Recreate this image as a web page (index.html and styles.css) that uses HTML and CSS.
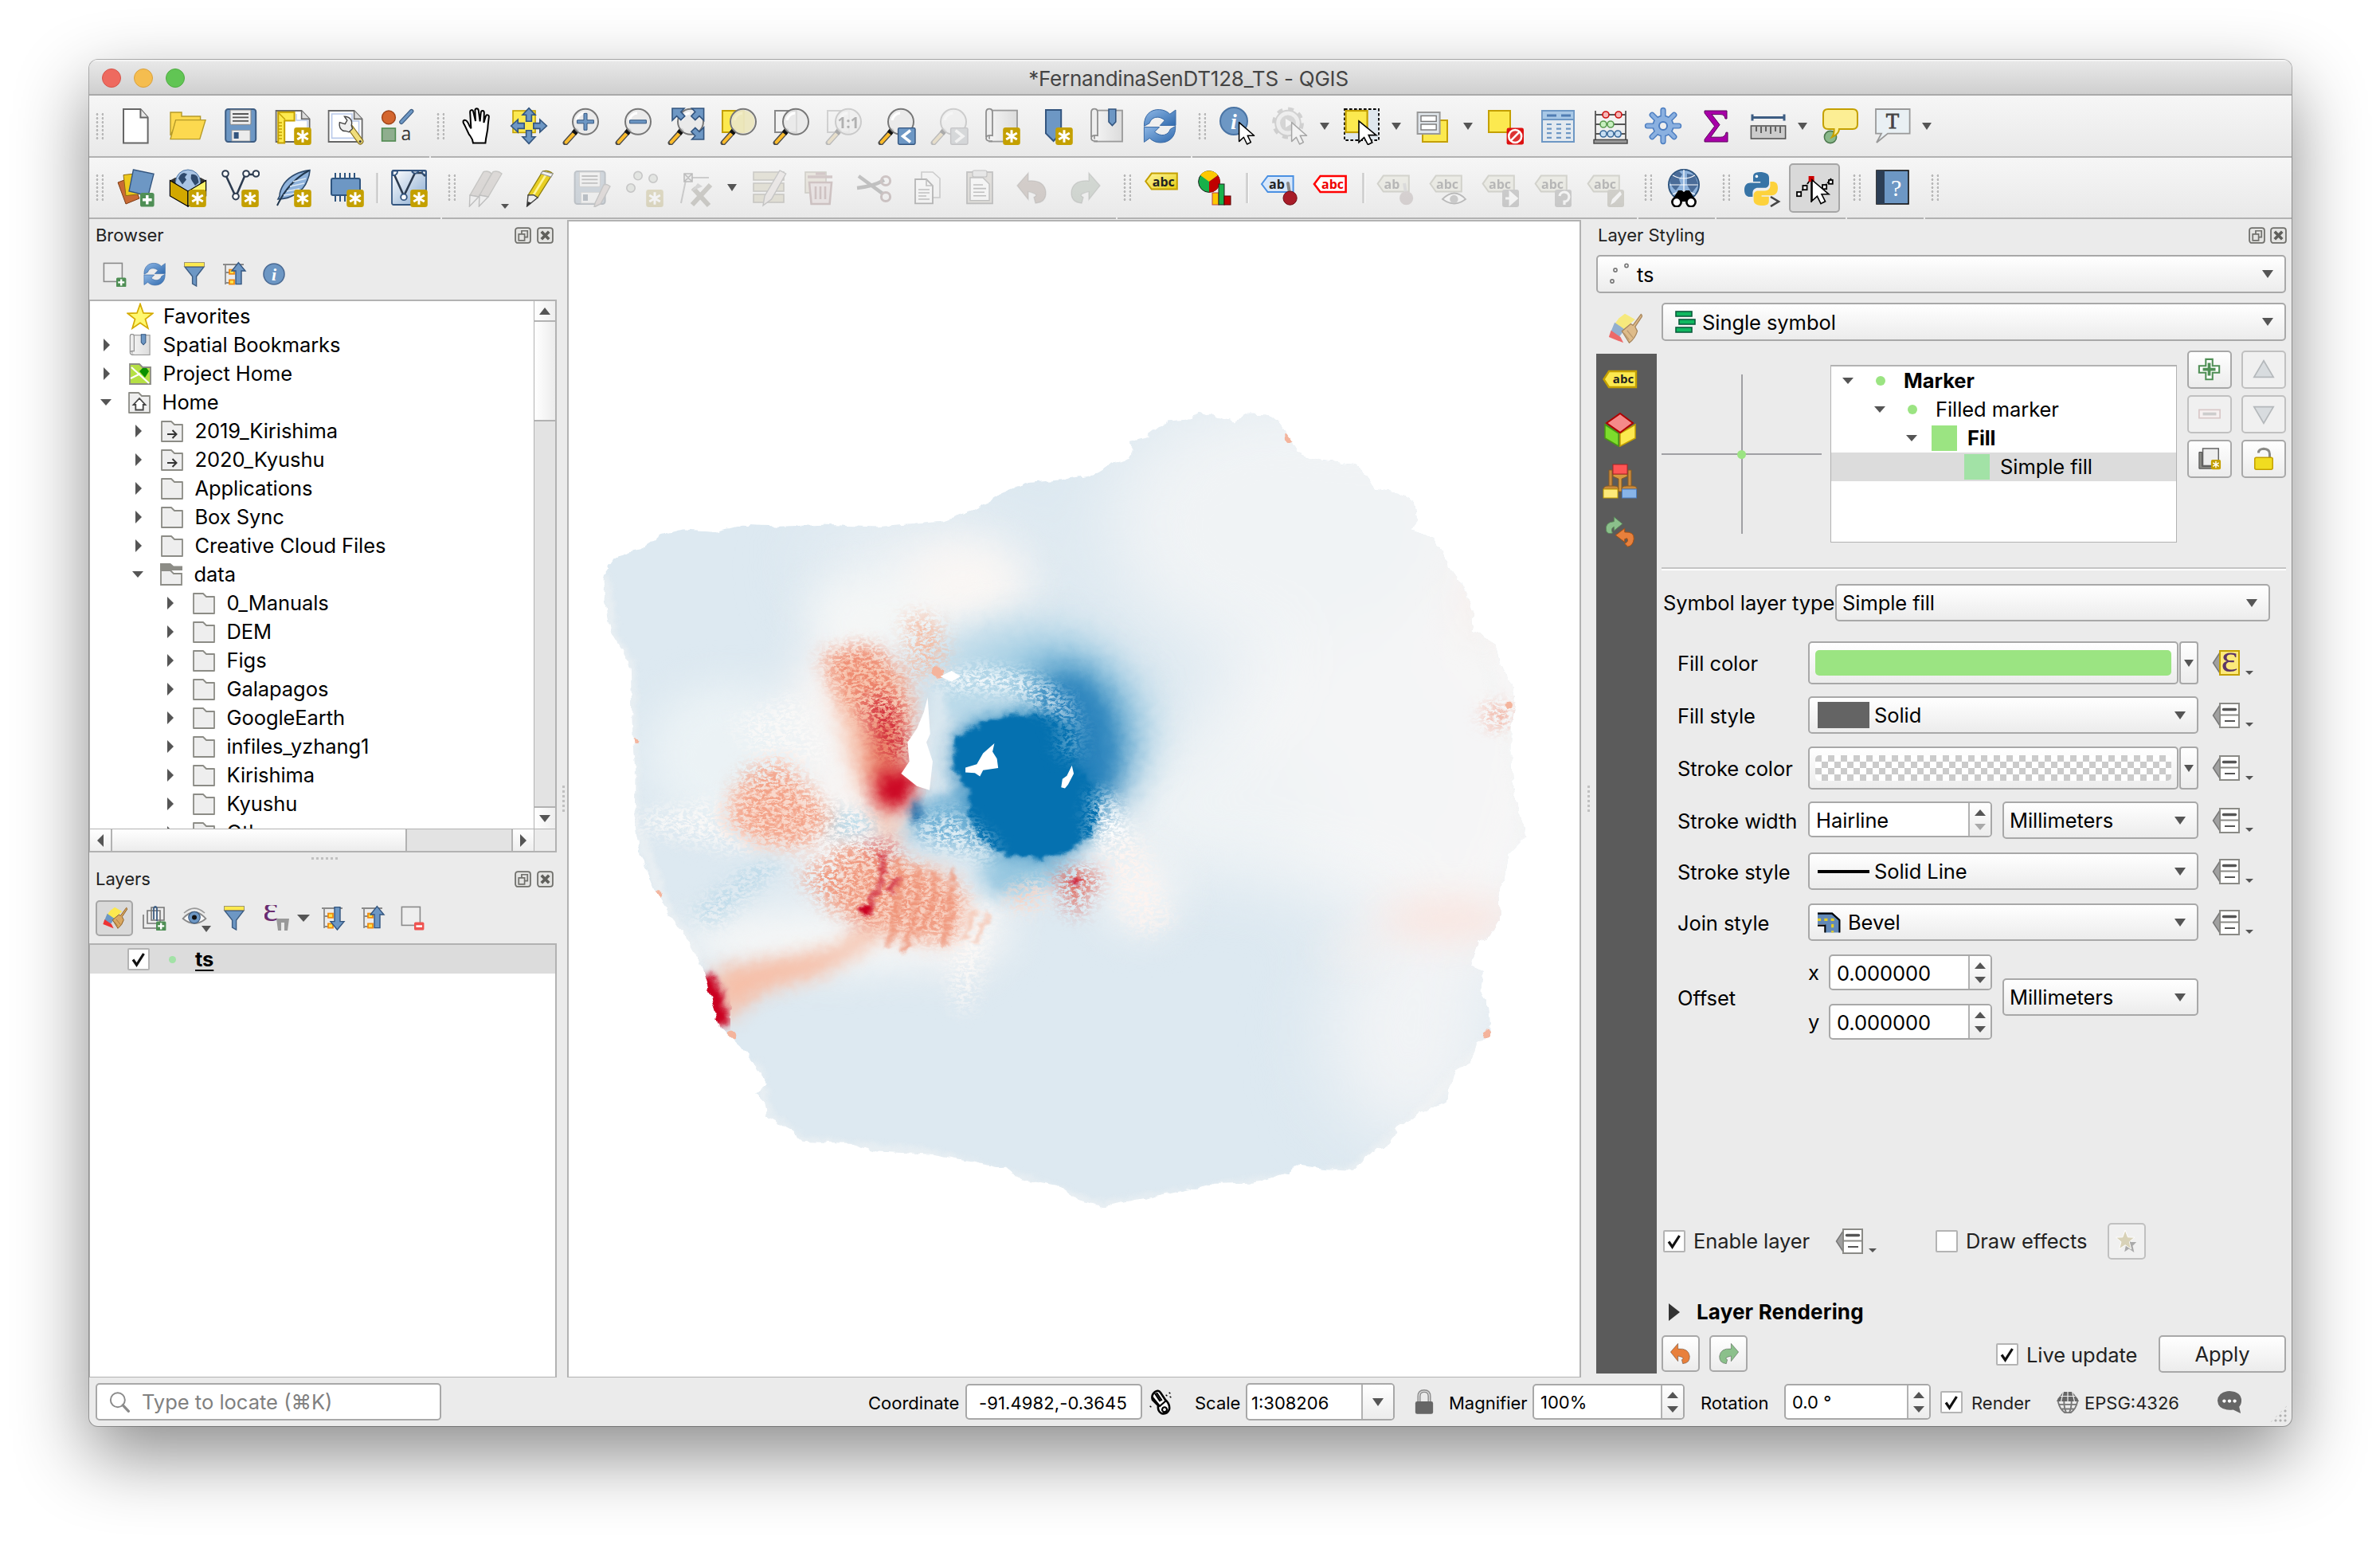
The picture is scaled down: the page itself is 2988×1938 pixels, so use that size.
FILE: index.html
```html
<!DOCTYPE html>
<html lang="en">
<head>
<meta charset="utf-8">
<title>*FernandinaSenDT128_TS - QGIS</title>
<link rel="stylesheet" href="styles.css">
</head>
<body>
<svg class="defs" width="0" height="0" aria-hidden="true">
<defs>
<linearGradient id="gBlue" x1="0" y1="0" x2="1" y2="1"><stop offset="0" stop-color="#8fb8e6"/><stop offset="1" stop-color="#2f69ad"/></linearGradient>
<linearGradient id="gMesh" x1="0" y1="0" x2="1" y2="1"><stop offset="0" stop-color="#fff"/><stop offset="1" stop-color="#86a9d0"/></linearGradient>
<linearGradient id="gYel" x1="0" y1="0" x2="1" y2="1"><stop offset="0" stop-color="#fff7a0"/><stop offset="1" stop-color="#e6cc10"/></linearGradient>
<linearGradient id="gGrey" x1="0" y1="0" x2="1" y2="0"><stop offset="0" stop-color="#f4f4f4"/><stop offset="1" stop-color="#dcdcdc"/></linearGradient>

<symbol id="badge" viewBox="0 0 24 24"><rect x="12.6" y="13" width="10.8" height="11" rx="1.6" fill="#c4a000"/><path d="M18 14.6v7.8M14.6 16.5l6.8 4M14.6 20.5l6.8-4" stroke="#fff" stroke-width="1.5" fill="none"/></symbol>
<symbol id="lens" viewBox="0 0 24 24"><path d="M8.6 15.2L2 22.6" stroke="#4a4a4a" stroke-width="3.4" stroke-linecap="round"/><path d="M7.2 16.9L2.3 22.3" stroke="#fcbc2c" stroke-width="2" stroke-linecap="round"/><path d="M9 14.6L7.2 16.8" stroke="#111" stroke-width="3.4"/><circle cx="14.5" cy="9.4" r="8" fill="#e9e9e9" fill-opacity=".85" stroke="#777" stroke-width="1"/><path d="M9 8.5a5.8 5.8 0 0 1 5-4.6" stroke="#fff" stroke-width="1.6" fill="none"/></symbol>
<symbol id="cursor" viewBox="0 0 24 24" overflow="visible"><path d="M12 9.800v12l2.900-2.700 2.100 4.400 2.400-1.200-2.100-4.200h4.200z" fill="#fff" stroke="#000" stroke-width=".75" stroke-linejoin="round"/></symbol>

<symbol id="new" viewBox="0 0 24 24"><path d="M4.5 1.5h10.7l4.6 5.2v16H4.500z" fill="#fff" stroke="#666"/><path d="M15.200 1.500v5.200h4.600" fill="#e8e8e8" stroke="#666"/></symbol>
<symbol id="open" viewBox="0 0 24 24"><path d="M1 3.500h7v2.500h11.800v4H5L1 18z" fill="#fcd94f" stroke="#b59a28" stroke-width=".7"/><path d="M4.300 8.300h18.700l-3.600 12H1z" fill="#fcd94f" stroke="#b59a28" stroke-width=".7"/></symbol>
<symbol id="save" viewBox="0 0 24 24"><rect x="2.600" y="1.500" width="19" height="20.500" rx="1.600" fill="#6d97c4" stroke="#3c5c82"/><path d="M5.500 2h13v8.500q0 .7-.7.7H6.200q-.7 0-.7-.7z" fill="#ececec" stroke="#888" stroke-width=".5"/><path d="M7 4.500h10M7 6.700h10M7 8.900h10" stroke="#555" stroke-width=".9"/><rect x="6.500" y="14.700" width="11.500" height="6.800" fill="#ececec" stroke="#999" stroke-width=".4"/><rect x="7.800" y="16" width="3" height="4" fill="#33557f"/></symbol>
<symbol id="layout" viewBox="0 0 24 24"><path d="M1.300 2.500h16l5 5.200V22H1.300z" fill="#fff" stroke="#666" stroke-width=".9"/><path d="M17.300 2.500v5.200h5" fill="#ddd" stroke="#666" stroke-width=".8"/><path d="M2.600 3.400h10.200v5.400H6.600v14H2.600z" fill="#fce94f" stroke="#c4a000" stroke-width="1"/><path d="M3 10h2M3 12h2M3 14h2M3 16h2M3 18h2M3 20h2M3 4l4 4" stroke="#c4a000" stroke-width=".7"/><path d="M14 4.500v4h7v5" fill="none" stroke="#b9c9ea" stroke-width=".7"/><use href="#badge"/></symbol>
<symbol id="manager" viewBox="0 0 24 24"><path d="M1.300 2.500h16l5 5.200V22H1.300z" fill="#fff" stroke="#666" stroke-width=".9"/><path d="M17.300 2.500v5.200h5" fill="#ddd" stroke="#666" stroke-width=".8"/><path d="M3.300 4.500h12.700v4.500h4.300v10.700H3.300z" fill="none" stroke="#b9c9ea" stroke-width=".8"/><path d="M14.500 12.500l6.700 9.200" stroke="#8a7320" stroke-width="4" stroke-linecap="round"/><path d="M15.200 13.500l6 8.200" stroke="#f0de7c" stroke-width="2.800" stroke-linecap="round"/><path d="M8.200 9.800l3.400 1 1.300-2.300-1.700-2.400c3.500 0 5.300 2.600 4.400 5.600l.7 2-2.200 2.200-2.100-.7c-2.200.4-4.500-1.800-3.800-5.400z" fill="#eee" stroke="#444" stroke-width=".7"/><circle cx="21.100" cy="21.800" r=".8" fill="#444"/></symbol>
<symbol id="stylem" viewBox="0 0 24 24"><ellipse cx="6" cy="6.700" rx="4.200" ry="4.200" fill="#d4662f" stroke="#a04418" stroke-width=".7"/><path d="M14 9.600l6.300-6.800" stroke="#3c5c82" stroke-width="2.800" stroke-linecap="round"/><path d="M14 9.600l6.300-6.800" stroke="#6d97c4" stroke-width="1.600" stroke-linecap="round"/><rect x="1.800" y="13.500" width="8.400" height="8" fill="#8fae8e" stroke="#4f8a50" stroke-width=".8"/><text x="13.700" y="21" font-size="11.500" class="ti" fill="#333">a</text></symbol>
<symbol id="hand" viewBox="0 0 24 24"><path d="M8.200 22.500c-.2-3-1.500-3.800-2.700-5.700L3 11.500c-.8-1.500-1.700-2.700-.5-3.300 1.200-.6 2.400 1 3.400 3.500l1 1.600L6.300 3.400c-.2-2 1.700-2.200 2-.5l1.400 5.800-.3-6.600c0-1.700 2-1.700 2.200 0l.9 6.800.6-5.700c.2-1.500 2-1.300 2 .2l-.2 6.300 1.200-4c.5-1.400 2.200-.9 2 .5l-.6 5c0 4-1.200 6.200-1.600 11.300z" fill="#fff" stroke="#000" stroke-width="1" transform="translate(1.800 .3)"/></symbol>
<symbol id="pan" viewBox="0 0 24 24"><rect x="2" y="2.500" width="14" height="13.700" fill="#fce94f" stroke="#c4a000" stroke-width=".8"/><path d="M12 .8l4 4.300h-2.300v4h-3.400v-4H8zM12 23.200l4-4.300h-2.300v-4h-3.400v4H8zM.8 12l4.300-4v2.300h4v3.400h-4V16zM23.200 12l-4.300-4v2.300h-4v3.400h4V16z" fill="#6d97c4" stroke="#33557f" stroke-width=".8"/></symbol>
<symbol id="zin" viewBox="0 0 24 24"><use href="#lens"/><path d="M13.500 4.200h2v4.200h4.200v2h-4.200v4.200h-2v-4.200H9.300v-2h4.200z" fill="#6d97c4" stroke="#33557f" stroke-width=".5"/></symbol>
<symbol id="zout" viewBox="0 0 24 24"><use href="#lens"/><path d="M9.300 8.400h10.400v2H9.300z" fill="#6d97c4" stroke="#33557f" stroke-width=".5"/></symbol>
<symbol id="zfull" viewBox="0 0 24 24"><use href="#lens"/><path d="M3 1h7.500L8.400 3.200l2.500 2.700-2.500 2.400-2.600-2.500L3 8.500zM22.800 1h-7.500l2.100 2.200-2.500 2.700 2.500 2.400L20 5.800l2.800 2.700zM22.800 20.500h-7.500l2.100-2.200-2.500-2.700 2.500-2.400 2.600 2.500 2.800-2.700z" fill="#6d97c4" stroke="#33557f" stroke-width=".8"/></symbol>
<symbol id="zsel" viewBox="0 0 24 24"><rect x="1.500" y="2.500" width="13.500" height="13.500" fill="#fce94f" stroke="#c4a000"/><use href="#lens"/><circle cx="14.500" cy="9.400" r="7.200" fill="#ece6b0" fill-opacity=".7"/></symbol>
<symbol id="zlay" viewBox="0 0 24 24"><rect x="1.500" y="2.500" width="13.500" height="13.500" fill="#f2f2f2" stroke="#888"/><use href="#lens"/></symbol>
<symbol id="znat" viewBox="0 0 24 24"><rect x="1.500" y="2.500" width="13.500" height="13.500" fill="#f2f2f2" stroke="#888"/><use href="#lens"/><text x="14.500" y="13.400" font-size="9.500" font-weight="700" text-anchor="middle" class="ti" fill="#222">1:1</text></symbol>
<symbol id="zlast" viewBox="0 0 24 24"><use href="#lens"/><rect x="12.800" y="13.300" width="10.700" height="10.300" rx=".8" fill="#6d97c4" stroke="#33557f" stroke-width=".7"/><path d="M20.500 14.800L15.800 18.500l4.700 3.700" fill="none" stroke="#fff" stroke-width="1.800"/></symbol>
<symbol id="znext" viewBox="0 0 24 24"><use href="#lens"/><rect x="12.800" y="13.300" width="10.700" height="10.300" rx=".8" fill="#9aa7b5" stroke="#667" stroke-width=".7"/><path d="M15.800 14.800l4.700 3.700-4.700 3.700" fill="none" stroke="#fff" stroke-width="1.800"/></symbol>
<symbol id="roll" viewBox="0 0 24 24"><rect x="4" y="2.300" width="17.500" height="19.500" fill="url(#gGrey)" stroke="#9a9a9a" stroke-width=".9"/><path d="M2 19V3.500Q2 1.300 4 1.300T6 3.500v14.600q-4-.6-4 1.600t4 1.900" fill="#eee" stroke="#8f8f8f" stroke-width=".9"/></symbol>
<symbol id="nview" viewBox="0 0 24 24"><use href="#roll"/><use href="#badge"/></symbol>
<symbol id="nbook" viewBox="0 0 24 24"><path d="M6.500 2h9.600v14.500l-4.800 5-4.800-4.800z" fill="#6d97c4" stroke="#33557f"/><use href="#badge"/></symbol>
<symbol id="sbook" viewBox="0 0 24 24"><use href="#roll"/><path d="M13 1.500h4.400v8l-2.200 2.300L13 9.500z" fill="#6d97c4" stroke="#33557f" stroke-width=".8"/></symbol>
<symbol id="refresh" viewBox="0 0 24 24"><path d="M2.200 12.200C2 5 6.500 1.500 11.700 1.800c3 .1 5 1.200 6.700 2.800L22 2v9.700h-9.800l3-3.200c-4-3.400-8.500-2-9.600 1.800z" fill="url(#gBlue)" stroke="#3a6aa5" stroke-width=".5"/><path d="M21.900 12.200c.2 7.200-4.300 10.300-9.500 10.300-3 0-5-1.200-6.700-2.800L2.200 22.200v-9.400h9.600l-3 3c4 3.400 8.600 2.200 9.800-1.700z" fill="url(#gBlue)" stroke="#3a6aa5" stroke-width=".5"/></symbol>
<symbol id="ident" viewBox="0 0 24 24"><circle cx="9.500" cy="9" r="8.500" fill="#6d97c4" stroke="#4a74a4"/><text x="9.500" y="14" font-size="14" font-style="italic" font-weight="700" text-anchor="middle" class="se" fill="#fff">i</text><use href="#cursor" x=".8"/></symbol>
<symbol id="action" viewBox="0 0 24 24"><circle cx="10.500" cy="10.300" r="8.700" fill="none" stroke="#888" stroke-width="2.600" stroke-dasharray="3.400 3.400"/><circle cx="10.500" cy="10.300" r="7.900" fill="#e6e6e6" stroke="#888" stroke-width="1"/><circle cx="10.500" cy="10.300" r="5" fill="#999" /><path d="M9 7.500l4.500 2.800L9 13z" fill="#fff"/><use href="#cursor" x=".8"/></symbol>
<symbol id="select" viewBox="0 0 24 24"><rect x="1" y="1.500" width="21.500" height="19.500" fill="#dfe7ee" stroke="#000" stroke-width=".9" stroke-dasharray="1.800 1.200"/><rect x="1.800" y="2.500" width="13.500" height="13.500" fill="#fce94f" stroke="#c4a000" stroke-width="1.100"/><path d="M10 9v13.300l3.300-3 2.400 4.500 2.700-1.400-2.300-4.600h4.800z" fill="#fff" stroke="#000" stroke-width=".8"/></symbol>
<symbol id="selform" viewBox="0 0 24 24"><rect x="5" y="8.500" width="15.500" height="13.500" fill="#fce94f" stroke="#c4a000"/><rect x="1.800" y="3.500" width="14" height="13.500" fill="#dfe5ea" stroke="#999"/><rect x="4" y="5.700" width="9.600" height="3.500" fill="#fff" stroke="#777" stroke-width=".7"/><rect x="4" y="11" width="9.600" height="3.500" fill="#fff" stroke="#777" stroke-width=".7"/></symbol>
<symbol id="desel" viewBox="0 0 24 24"><rect x="1.500" y="2.500" width="13.500" height="13.500" fill="#fce94f" stroke="#c4a000"/><rect x="12.800" y="13.300" width="10.700" height="10.500" rx="1.200" fill="#d11"/><circle cx="18.100" cy="18.500" r="4" fill="#d33" stroke="#fff" stroke-width="1.300"/><path d="M15.300 21.300l5.600-5.600" stroke="#fff" stroke-width="1.300"/></symbol>
<symbol id="table" viewBox="0 0 24 24"><rect x="2" y="2.500" width="20" height="19.500" fill="#e3e9ef" stroke="#6d97c4"/><rect x="2.400" y="3" width="19.200" height="5" fill="#a8c8e6"/><path d="M2 8h20" stroke="#6d97c4"/><path d="M5 5.500h6M14 5.500h6" stroke="#4f7db3" stroke-width="1.600"/><path d="M5 11h3M11 11h3M17 11h3M5 13.800h3M11 13.800h3M17 13.800h3M5 16.600h3M11 16.600h3M17 16.600h3M5 19.400h3M11 19.400h3M17 19.400h3" stroke="#6d97c4" stroke-width="1.100"/></symbol>
<symbol id="abacus" viewBox="0 0 24 24"><path d="M2.500 2.500v19M21.500 2.500v19M2.500 5h19M2.500 11h19M2.500 17h19" stroke="#555" stroke-width=".9" fill="none"/><g stroke-width=".8"><g fill="#f6b7b7" stroke="#c11"><circle cx="9" cy="5" r="2"/><circle cx="17" cy="5" r="2"/></g><g fill="#c8efc0" stroke="#5a9c50"><circle cx="7.500" cy="11" r="2"/><circle cx="12" cy="11" r="2"/></g><g fill="#c7def2" stroke="#3c6c9c"><circle cx="7.500" cy="17" r="2"/><circle cx="12" cy="17" r="2"/><circle cx="16.600" cy="17" r="2"/></g></g><rect x="1.500" y="20.700" width="21" height="2.300" fill="#999" stroke="#444" stroke-width=".7"/></symbol>
<symbol id="cog" viewBox="0 0 24 24"><g stroke="#4a7cc0" stroke-width="3.600" stroke-linecap="round"><path d="M12 2.200v19.600M2.200 12h19.600M5.100 5.100l13.800 13.800M18.900 5.100L5.100 18.900"/></g><circle cx="12" cy="12" r="6.800" fill="#4a7cc0"/><g stroke="#8ab0e0" stroke-width="2.200" stroke-linecap="round"><path d="M12 2.200v19.600M2.200 12h19.600M5.100 5.100l13.800 13.800M18.900 5.100L5.100 18.900"/></g><circle cx="12" cy="12" r="6" fill="#8ab0e0"/><circle cx="12" cy="12" r="2.500" fill="#eee" stroke="#4a7cc0"/></symbol>
<symbol id="sigma" viewBox="0 0 24 24"><path d="M5 2.500h14v5h-1q-.5-2.700-3-2.700H9.500l5 6.500-5.700 7.800H15q3 0 3.500-3h1V22H5v-1.500l6.300-8.300L5 4z" fill="#a800a8" stroke="#5c005c" stroke-width=".5"/></symbol>
<symbol id="ruler" viewBox="0 0 24 24"><path d="M2 6.800h20M2 4.800v4M22 4.800v4" stroke="#3c5c82" stroke-width="1.500"/><rect x="1.200" y="12" width="21.600" height="8" fill="#ccc" stroke="#555" stroke-width=".8"/><path d="M4.500 12.500v3M7.500 12.500v4M10.500 12.500v3M13.500 12.500v4.500M16.500 12.500v3M19.500 12.500v4" stroke="#555" stroke-width=".9"/></symbol>
<symbol id="tip" viewBox="0 0 24 24"><circle cx="6" cy="19" r="3.800" fill="#8ab98a" stroke="#4f7a50" stroke-width=".8"/><path d="M4.500 1.500h15.500q3 0 3 3v6.500q0 3-3 3h-8.500q0 3-4.500 5 1.500-2 1.300-5H4.500q-3 0-3-3V4.500q0-3 3-3z" fill="#fcee94" stroke="#c4a000" stroke-width="1"/></symbol>
<symbol id="anno" viewBox="0 0 24 24"><path d="M1.500 1.500h21.300v15.300H9l-7 5.700 3-5.700H1.500z" fill="#e9f0f4" stroke="#999" stroke-width=".9"/><text x="12" y="13.600" font-size="13.500" text-anchor="middle" class="se" fill="#444" stroke="#444" stroke-width=".4">T</text></symbol>

<symbol id="dsm" viewBox="0 0 24 24"><path d="M1 8.500l8-3 5.500 13-8.500 3.500z" fill="#c96a34" stroke="#7c3c14" stroke-width=".5"/><path d="M4.500 3.800l9-1 1.500 13-9 1z" fill="#edc91d" stroke="#8f6a10" stroke-width=".5"/><path d="M10.700.5L23.500 3.200 20 16.800 8 14z" fill="#6d97c4" stroke="#33557f" stroke-width=".7"/><rect x="15" y="15" width="8.800" height="8.800" rx="1.300" fill="#4f8f55"/><path d="M19.400 16.500v5.800M16.500 19.400h5.800" stroke="#fff" stroke-width="1.700"/></symbol>
<symbol id="gpkg" viewBox="0 0 24 24"><path d="M.7 7.300L4 5.500h16l3.300 1.800L12 14z" fill="#333"/><circle cx="12" cy="8.300" r="7.800" fill="#a9c4e4" stroke="#4a74a4" stroke-width=".5"/><path d="M6 6q1-3 3.500-3.500l2 .8-1.500 2 1 1.500-2.500 3zM14 3.500q2.500-.5 4 1.500l.8 3.500-2.300 2-2-3-.7-1.500z" fill="#2f4a6d"/><path d="M.7 7.300L12 14v9.500L.7 17z" fill="#d2a800" stroke="#000" stroke-width=".6"/><path d="M23.300 7.300L12 14v9.500l11.300-6.500z" fill="#fcf46c" stroke="#000" stroke-width=".6"/><use href="#badge"/></symbol>
<symbol id="vec" viewBox="0 0 24 24"><path d="M2.500 3.500L9 17.500 15 3.500h6" fill="none" stroke="#2d3c50" stroke-width="1.300"/><g fill="#fff" stroke="#2d3c50" stroke-width="1"><circle cx="2.500" cy="3" r="1.900"/><circle cx="9" cy="17.300" r="1.900"/><circle cx="15.500" cy="3" r="1.900"/><circle cx="21.700" cy="3" r="1.900"/></g></symbol>
<symbol id="nvec" viewBox="0 0 24 24"><use href="#vec"/><use href="#badge"/></symbol>
<symbol id="feather" viewBox="0 0 24 24"><path d="M22.500.8Q12 2 6.500 9 3.500 13.500 3.500 17l-1 2Q9 18.800 13 16q6-3 8-9 1.300-3 1.500-6.200z" fill="#8fb3dc" stroke="#2d4a6c" stroke-width=".8"/><path d="M22 1Q9 8 2 23" fill="none" stroke="#22384f" stroke-width="1"/><path d="M12 8l8-2M10 11l9-2M8 14l8-1.500M6 16.500l7-1" stroke="#dfeaf6" stroke-width=".7"/></symbol>
<symbol id="spat" viewBox="0 0 24 24"><use href="#feather"/><use href="#badge"/></symbol>
<symbol id="chip" viewBox="0 0 24 24"><path d="M5.500 2.500v18M8.500 2.500v18M11.500 2.500v18M14.500 2.500v18M17.500 2.500v18" stroke="#2f557f" stroke-width="1"/><rect x="3" y="6" width="18" height="10.500" rx="1" fill="#6d97c4" stroke="#2f557f"/><use href="#badge"/></symbol>
<symbol id="mesh" viewBox="0 0 24 24"><rect x="1" y="1" width="21.500" height="21.500" rx="1" fill="url(#gMesh)" stroke="#33557f" stroke-width=".9"/><path d="M2 2.500L8.500 17 15.500 2.500h4.500l2 2" fill="none" stroke="#2d3c50" stroke-width="1.300"/><g fill="#fff" stroke="#33557f" stroke-width=".9"><path d="M1.500 4a2.500 2.500 0 0 0 3-2.700H1.500zM13.500 1.300a2.200 2.200 0 0 0 4.200 0zM20 1.300a2.200 2.200 0 0 0 2.300 2.400V1.300z"/><circle cx="8.500" cy="17.700" r="1.900"/></g><use href="#badge"/></symbol>
<symbol id="pencil" viewBox="0 0 24 24"><path d="M4.500 16.500L13.700 1.500q3.500-1 6.300 1.500l-9.500 15z" fill="#e8cf22" stroke="#8f7f10" stroke-width=".7"/><path d="M7.500 17L16.700 2" stroke="#fff59a" stroke-width="1.300"/><path d="M4.500 16.500l-.7 7 6.700-5.500-2.500-1.700z" fill="#eee" stroke="#444" stroke-width=".7"/><path d="M4.200 20.500l-.4 3 2.800-2.300z" fill="#333"/><path d="M13.700 1.500l6.300 1.500-1 2-6.500-2z" fill="#f3f3f3" stroke="#999" stroke-width=".6"/></symbol>
<symbol id="pencils" viewBox="0 0 24 24"><path d="M1 16.500L9.500 1.800q3-1 5 1.200l-8 14.500zM7 16.500L15.500 1.800q3-1 5.500 1.200l-8.500 14.500z" fill="#b59c90" stroke="#665" stroke-width=".7"/><path d="M1 16.500l-.3 7 5.800-6zM7 16.500l-.3 7 5.800-6z" fill="#eee" stroke="#555" stroke-width=".7"/></symbol>
<symbol id="saveed" viewBox="0 0 24 24"><g transform="translate(-1.800)"><use href="#save"/></g><path d="M13.500 21.500L19 10q2-.8 4 1l-6 11-4 2z" fill="#c5a79b" stroke="#666" stroke-width=".7"/></symbol>
<symbol id="addpt" viewBox="0 0 24 24"><g fill="#b9cbb4" stroke="#666" stroke-width=".8"><circle cx="7.500" cy="4.300" r="2.600"/><circle cx="17" cy="6" r="2.600"/><circle cx="3" cy="12" r="2.600"/></g><use href="#badge"/></symbol>
<symbol id="vertex" viewBox="0 0 24 24"><path d="M1.500 21.500L4.500 7M8 5.500h11" stroke="#777" stroke-width="1" fill="none"/><path d="M3.500 3h5v5h-5zM3.500 3l5 5M8.500 3l-5 5" fill="#ddd" stroke="#444" stroke-width=".8"/><path d="M9 12l10 11M20 10L8.500 22.500" stroke="#7c7458" stroke-width="3"/><path d="M8 14l4-5 3 2z" fill="#999"/></symbol>
<symbol id="multi" viewBox="0 0 24 24"><g fill="#ccb96f" stroke="#777055" stroke-width=".8"><rect x="2" y="2" width="19" height="5"/><rect x="2" y="9" width="19" height="5"/><rect x="2" y="16" width="19" height="5"/></g><path d="M9 17L18.500 1l3.800 2-9 16-5.300 4z" fill="#e0d0c8" stroke="#666" stroke-width=".7"/></symbol>
<symbol id="trash" viewBox="0 0 24 24"><rect x="1.500" y="2" width="13" height="13" fill="#d8c890" stroke="#8a7f50" stroke-width=".8"/><path d="M3 5h15.500M8 3h6" stroke="#b06060" stroke-width="1.800"/><path d="M4 8.500h14L16.800 22H5.300z" fill="#e8c0c0" stroke="#a55" stroke-width="1.300"/><path d="M8 11v8M11 11v8M14 11v8" stroke="#a55" stroke-width="1.300"/></symbol>
<symbol id="cut" viewBox="0 0 24 24"><path d="M2 4.500l15.500 11.300M1 12q10-1 17-5" stroke="#555" stroke-width="2.200" fill="none"/><circle cx="19" cy="7.500" r="2.800" fill="none" stroke="#955" stroke-width="1.500"/><circle cx="19" cy="17.500" r="2.800" fill="none" stroke="#955" stroke-width="1.500"/></symbol>
<symbol id="copy" viewBox="0 0 24 24"><path d="M8.500 2h7l4.500 4v12H8.500z" fill="#f4f4f4" stroke="#777" stroke-width=".8"/><path d="M4.500 6.500h7l4 4V21.700h-11z" fill="#fff" stroke="#333" stroke-width=".9"/><path d="M11.500 6.500v4h4M6.500 13h7M6.500 15h7M6.500 17h5M6.500 19h7" stroke="#555" stroke-width=".8" fill="none"/></symbol>
<symbol id="paste" viewBox="0 0 24 24"><rect x="4" y="2" width="16" height="19.700" fill="#bdb39a" stroke="#555" stroke-width=".9"/><path d="M6 5.500h8l4 4v10.300H6z" fill="#fff" stroke="#555" stroke-width=".7"/><rect x="7.500" y="1" width="9" height="4" rx="1" fill="#ccc" stroke="#555" stroke-width=".6"/><path d="M8 10h6M8 12.300h8M8 14.600h7M8 16.900h8" stroke="#555" stroke-width=".8"/></symbol>
<symbol id="undo" viewBox="0 0 24 24"><path d="M2.500 10.500L9.500 2.500v5q10-.8 11 7 .3 6.500-6.500 7l-1-3.700q4-1.800-3.500-3.500v5z" fill="currentColor" stroke="#0005" stroke-width=".7"/></symbol>
<symbol id="redo" viewBox="0 0 24 24"><use href="#undo" transform="matrix(-1 0 0 1 24 0)"/></symbol>
<symbol id="lab" viewBox="0 0 24 24"><g transform="translate(-.6)"><path d="M1.700 7.800l3.800-5h16v10h-16z" fill="url(#gYel)" stroke="#c4a000" stroke-width="1"/><text x="13" y="11" font-size="8" font-weight="700" text-anchor="middle" class="ti" fill="#222">abc</text></g></symbol>
<symbol id="diag" viewBox="0 0 24 24"><circle cx="8" cy="8" r="6.700" fill="#18b04a" stroke="#222" stroke-width=".5"/><path d="M8 8L2.500 4A6.700 6.700 0 0 1 13.500 4z" fill="#fdc800"/><path d="M8 8l5.500-4A6.700 6.700 0 0 1 8 14.700z" fill="#c00000"/><rect x="10" y="15" width="4" height="7.500" fill="#fdc800" stroke="#b44" stroke-width=".5"/><rect x="14" y="9.500" width="3.500" height="13" fill="#18b04a" stroke="#222" stroke-width=".5"/><rect x="17.500" y="17" width="4" height="5.500" fill="#c00000" stroke="#500" stroke-width=".5"/></symbol>
<symbol id="pinl" viewBox="0 0 24 24"><path d="M1 9.500l3.800-5h16v10h-16z" fill="#d7e7fa" stroke="#4a90e2" stroke-width="1"/><text x="10.500" y="12.600" font-size="8" font-weight="700" text-anchor="middle" class="ti" fill="#222">ab</text><path d="M17.500 9l1.500 9" stroke="#888" stroke-width="2" stroke-linecap="round"/><circle cx="18.800" cy="18.300" r="4.300" fill="#a81c28" stroke="#6c0c14" stroke-width=".5"/></symbol>
<symbol id="unpl" viewBox="0 0 24 24"><path d="M1 9.500l3.800-5h16v10h-16z" fill="#fff" stroke="#f00" stroke-width="1.300"/><text x="12.500" y="12.500" font-size="8" font-weight="700" text-anchor="middle" class="ti" fill="#e00">abc</text></symbol>
<symbol id="ltag" viewBox="0 0 24 24"><path d="M.8 9.300l3.600-5h16v10h-16z" fill="#dddcae" stroke="#8f8f60" stroke-width="1"/><text x="11.500" y="12.600" font-size="8" font-weight="700" text-anchor="middle" class="ti" fill="#333">abc</text></symbol>
<symbol id="l1" viewBox="0 0 24 24"><path d="M.8 9.300l3.600-5h16v10h-16z" fill="#dddcae" stroke="#8f8f60" stroke-width="1"/><text x="9.700" y="12.600" font-size="8" font-weight="700" text-anchor="middle" class="ti" fill="#333">ab</text><path d="M17.500 9l1.500 9" stroke="#aaa" stroke-width="2"/><circle cx="18.800" cy="18.300" r="4.300" fill="#a88"/></symbol>
<symbol id="l2" viewBox="0 0 24 24"><use href="#ltag"/><path d="M8.500 19q7.500-7.500 14.500 0-7 5.500-14.500 0z" fill="#fff" stroke="#444" stroke-width=".9"/><circle cx="15.700" cy="19" r="2.600" fill="#777"/></symbol>
<symbol id="l3" viewBox="0 0 24 24"><use href="#ltag"/><rect x="13" y="13" width="10.500" height="11" rx="1.500" fill="#777"/><path d="M15 18.500h5M18 15l4 3.500-4 3.500z" stroke="#fff" stroke-width="1.500" fill="#fff"/></symbol>
<symbol id="l4" viewBox="0 0 24 24"><use href="#ltag"/><rect x="13" y="13" width="10.500" height="11" rx="1.500" fill="#777"/><path d="M16 17a3 3 0 1 1 3 3.500v2" stroke="#fff" stroke-width="1.600" fill="none"/></symbol>
<symbol id="l5" viewBox="0 0 24 24"><use href="#ltag"/><rect x="13" y="13" width="10.500" height="11" rx="1.500" fill="#8b8660"/><path d="M15 22.500l1-3.500 5-5 1 2-4.500 5z" fill="#fff"/></symbol>
<symbol id="meta" viewBox="0 0 24 24"><circle cx="12" cy="10" r="9.500" fill="#8fb3dc" stroke="#2f557f" stroke-width="1"/><path d="M3 7q2-4 6-5.500l2 2-2 3 1 3-3 4q-3-2-4-6.500zM14 3l5 1 2 6-4 5-3-5z" fill="#4a6c98"/><path d="M3 10h18M12 .5v19M5 4q7 4 14 0M5 16q7-4 14 0" stroke="#fff" stroke-width=".6" fill="none"/><path d="M8.500 13.500h2.200l1.300 1 1.300-1h2.200l4.500 7H4z" fill="#000"/><circle cx="7.500" cy="20.800" r="2.800" fill="#fff" stroke="#000" stroke-width="1.300"/><circle cx="16.500" cy="20.800" r="2.800" fill="#fff" stroke="#000" stroke-width="1.300"/></symbol>
<symbol id="python" viewBox="0 0 24 24"><path d="M10.800 2c-4.500 0-4.300 1.900-4.300 4v2h4.600v.8H4.700C2.500 8.800 1 10.400 1 13.200s1.400 4.300 3.400 4.300h1.800v-2.400c0-2 1.500-3.200 3.300-3.200h4.300c1.500 0 2.700-1.200 2.700-2.800V5.500C16.500 3 14 2 10.800 2z" fill="#3774a6"/><circle cx="8.700" cy="4.700" r=".9" fill="#fff"/><path d="M12.200 23c4.500 0 4.200-1.900 4.200-4v-1.600h-4.600v-.8h6.500c2.200 0 3.700-1.600 3.700-4.600S20.600 8 18.600 8h-1.400v2.500c0 2-1.500 3.200-3.300 3.200H9.500c-1.500 0-2.700 1.200-2.700 2.800v3C6.800 22 9 23 12.200 23z" fill="#fdd23c"/><path d="M17.500 17.500l5 3-5 3" stroke="#444" stroke-width="1.300" fill="none"/></symbol>
<symbol id="active" viewBox="0 0 24 24"><path d="M2.500 15.500L6 11.500l4-5.500 4 6M18.500 11l4-5" stroke="#000" stroke-width=".9" fill="none" stroke-dasharray="2 .6"/><path d="M10 6v15" stroke="#000" stroke-width=".8"/><g fill="#fff" stroke="#000" stroke-width=".9"><rect x="1" y="14.500" width="2.600" height="2.600"/><rect x="4.700" y="10.500" width="2.600" height="2.600"/><rect x="17" y="10" width="2.600" height="2.600"/><rect x="21" y="7" width="2.400" height="2.400"/></g><rect x="8.300" y="4.500" width="3.500" height="3.500" fill="#c00"/><path d="M10.500 7v13l3.200-2.800 2.300 4.600 2.800-1.400-2.300-4.500h4.500z" fill="#fff" stroke="#000" stroke-width=".8"/></symbol>
<symbol id="help" viewBox="0 0 24 24"><rect x="2" y="1" width="20" height="21" fill="#6d97c4" stroke="#111" stroke-width=".8"/><rect x="2" y="1" width="5" height="21" fill="#2c3e55"/><text x="14.300" y="17" font-size="15" text-anchor="middle" class="se" fill="#fff">?</text></symbol>

<symbol id="addl" viewBox="0 0 16 16"><rect x="1.200" y="1.200" width="11.500" height="11.500" fill="#eee" stroke="#8a8a8a" stroke-width=".8"/><rect x="9" y="10.200" width="6.200" height="6" rx=".8" fill="#4f8f55"/><path d="M12.100 11.200v4M10.100 13.200h4" stroke="#fff" stroke-width="1.200"/></symbol>
<symbol id="filter" viewBox="0 0 16 16"><path d="M2 3.500h12L9.300 9.500v6l-2.500-1.500V9.500z" fill="#6d97c4" stroke="#3c5c82" stroke-width=".7"/><rect x="1.700" y=".8" width="12.600" height="2.500" fill="#fce94f" stroke="#8a8060" stroke-width=".4"/></symbol>
<symbol id="coll" viewBox="0 0 16 16"><path d="M1 2h13M2.500 2v12.500M2.500 7h3M2.500 13.500h3" stroke="#8a8a8a" stroke-width=".9" fill="none"/><rect x="5" y="5.300" width="3" height="2.600" fill="#fce94f" stroke="#f08a10" stroke-width=".9"/><rect x="5" y="11.700" width="3" height="2.600" fill="#fce94f" stroke="#f08a10" stroke-width=".9"/><path d="M10.700.8L15 6h-2.500v8.300H9V6H6.500z" fill="#6d97c4" stroke="#33557f" stroke-width=".7"/></symbol>
<symbol id="expd" viewBox="0 0 16 16"><path d="M1 2h13M2.500 2v12.500M2.500 7h3M2.500 13.500h3" stroke="#8a8a8a" stroke-width=".9" fill="none"/><rect x="5" y="5.300" width="3" height="2.600" fill="#fce94f" stroke="#f08a10" stroke-width=".9"/><rect x="5" y="11.700" width="3" height="2.600" fill="#fce94f" stroke="#f08a10" stroke-width=".9"/><path d="M10.700 15.500L15 10.300h-2.500v-9H9v9H6.500z" fill="#6d97c4" stroke="#33557f" stroke-width=".7"/></symbol>
<symbol id="info" viewBox="0 0 16 16"><circle cx="8" cy="8" r="6.500" fill="#6d97c4" stroke="#4a6a94" stroke-width=".8"/><text x="8" y="12" font-size="11" font-style="italic" font-weight="700" text-anchor="middle" class="se" fill="#fff">i</text></symbol>
<symbol id="brush" viewBox="0 0 24 24"><path d="M8 5L12 2l7 4-8 7-6-4z" fill="#fce94f"/><path d="M5 8l7 5-4 5-5.500-4z" fill="#6d97c4"/><path d="M2.500 13.500L9 18l2 4-10-4z" fill="#e33"/><path d="M23 2.500L17.500 10l-1.500-1-6 5 5 8q4-3 5.500-8l-1.500-3 5-7.500z" fill="#d9a860" stroke="#8a5a20" stroke-width=".7"/><path d="M11.500 15.500l3.500 4.500M13.500 13.500l4 5" stroke="#a8793c" stroke-width=".7"/></symbol>
<symbol id="grp" viewBox="0 0 16 16"><path d="M1 6v8.500h8M3.500 3.500v8h8v-8z" fill="#eee" stroke="#777" stroke-width=".8"/><path d="M6 1.500h8v8H6z" fill="none" stroke="#777" stroke-width=".8"/><path d="M7.500 9V2q1-2 2 0v8" stroke="#3c5c82" stroke-width=".9" fill="none"/><rect x="9" y="10.200" width="6.200" height="6" rx=".8" fill="#4f8f55"/><path d="M12.100 11.200v4M10.100 13.200h4" stroke="#fff" stroke-width="1.200"/></symbol>
<symbol id="eye" viewBox="0 0 16 16"><path d="M.8 8.500Q8 .5 15.200 8.500 8 14.500.8 8.500z" fill="#f8f8f8" stroke="#888" stroke-width=".9"/><path d="M1.500 5Q8-.8 14.500 5" fill="none" stroke="#999" stroke-width=".8"/><circle cx="8" cy="7.800" r="3.600" fill="#6d97c4" stroke="#3c5c82" stroke-width=".6"/><circle cx="8" cy="7.800" r="1.500" fill="#111"/></symbol>
<symbol id="eps" viewBox="0 0 16 16" overflow="visible"><text x="-1" y="10.200" font-size="23" class="se" fill="#6a2c70">ε</text><path d="M7.500 8.500H15.500L14.500 16H12.500V11H10.500V16H8.500z" fill="#999"/></symbol>
<symbol id="rem" viewBox="0 0 16 16"><rect x="1.200" y="1.200" width="11.500" height="11.500" fill="#eee" stroke="#8a8a8a" stroke-width=".8"/><rect x="9" y="10.800" width="6.200" height="5" rx=".8" fill="#ef5350"/><path d="M10.200 13.300h3.800" stroke="#fff" stroke-width="1.300"/></symbol>
<symbol id="float" viewBox="0 0 20 20"><rect x="1" y="1" width="18" height="18" rx="3" fill="#e4e4e2" stroke="#70706c" stroke-width="1.700"/><path d="M5 8.500h7V16H5zM8.500 8.500V4.500h7v7.500H12" fill="none" stroke="#70706c" stroke-width="1.600"/></symbol>
<symbol id="close" viewBox="0 0 20 20"><rect x="1" y="1" width="18" height="18" rx="3" fill="#e4e4e2" stroke="#70706c" stroke-width="1.700"/><path d="M5.500 5.500l9 9M14.500 5.500l-9 9" stroke="#60605c" stroke-width="3.600"/></symbol>

<symbol id="fold" viewBox="0 0 28 28"><path d="M1 1h12l4 4h10v21H1z" transform="translate(0 1)" fill="#eee" stroke="#8c8c86" stroke-width="1.800" stroke-linejoin="round"/></symbol>
<symbol id="folda" viewBox="0 0 28 28"><use href="#fold"/><path d="M8 18h11M14.500 13l5 5-5 5" fill="none" stroke="#333" stroke-width="2"/></symbol>
<symbol id="foldo" viewBox="0 0 28 28"><path d="M0 0h13l4 3.500h11V9H0z" fill="#8c8c86"/><path d="M1 9.500h12l4 4h10v14H1z" transform="translate(0 -.5)" fill="#eee" stroke="#8c8c86" stroke-width="1.800"/></symbol>
<symbol id="home" viewBox="0 0 28 28"><use href="#fold"/><path d="M6.500 17l7.500-8 7.500 8h-2.800v6.500H9.300V17z" fill="#fff" stroke="#444" stroke-width="1.800"/></symbol>
<symbol id="phome" viewBox="0 0 28 28"><path d="M1 2h12l4 4h10v21H1z" fill="#b5e044" stroke="#8c8c86" stroke-width="1.800"/><path d="M3 6l22 20M2 20l12-6" stroke="#fff" stroke-width="2.200"/><path d="M13 11l4-4h5l3 4-5 8z" fill="#0a9000"/></symbol>
<symbol id="star" viewBox="0 0 32 32"><path d="M16 1.500l3.800 10.700 11.200.3-8.900 6.800 3.200 10.900-9.300-6.500-9.300 6.500 3.200-10.900-8.900-6.800 11.200-.3z" fill="#fff870" stroke="#d4aa00" stroke-width="1.600"/></symbol>
<symbol id="chk" viewBox="0 0 28 28"><rect x="1" y="1" width="26" height="26" rx="1" fill="#fff" stroke="#b4b4b4" stroke-width="2"/></symbol>
<symbol id="chkon" viewBox="0 0 28 28"><use href="#chk"/><path d="M7 14.500l4.500 6.500L20.500 7" fill="none" stroke="#111" stroke-width="3.200"/></symbol>

<symbol id="pts" viewBox="0 0 28 28"><g fill="none" stroke="#777" stroke-width="1.600"><circle cx="4" cy="23" r="2.100"/><circle cx="8" cy="9" r="2.100"/><circle cx="22" cy="3.500" r="2.100"/></g></symbol>
<symbol id="single" viewBox="0 0 28 28"><g fill="#10b860" stroke="#0a5c3c" stroke-width="1.600"><rect x="2" y="1" width="20" height="6"/><rect x="6" y="11" width="20" height="6"/><rect x="2" y="21" width="20" height="6"/></g></symbol>
<symbol id="tablab" viewBox="0 0 44 32"><path d="M1.500 12L8 2h34v20H8z" fill="#fce94f" stroke="#c4a000" stroke-width="2.400"/><text x="26" y="17" font-size="15" font-weight="700" text-anchor="middle" class="ti" fill="#222">abc</text></symbol>
<symbol id="cube" viewBox="0 0 44 44"><path d="M3 15l17 11v16L3 32z" fill="#7ddc2c" stroke="#4a9a10" stroke-width="1.500"/><path d="M41 15L22 26v16l19-10z" fill="#fce94f" stroke="#c4a000" stroke-width="1.500"/><path d="M22 1l16 12-16 12L5 13z" fill="#f58a8a" stroke="#b00000" stroke-width="2"/></symbol>
<symbol id="brs" viewBox="0 0 44 44"><path d="M8 30V8h4v22M32 30V8h4v22" fill="#c98a3c" stroke="#8a5a20" stroke-width="1"/><path d="M13 13h18v3l-7 3v16h-4V19l-7-3z" fill="#d6983f" stroke="#8a5a20"/><rect x="13" y="1" width="18" height="12" fill="#f55" stroke="#a22"/><path d="M1 32q0-4 6-4h8q5 0 5 4zM24 32q0-4 6-4h8q5 0 5 4z" fill="#c98a3c" stroke="#8a5a20"/><rect x="1" y="32" width="18" height="11" fill="#fce97a" stroke="#c4a000"/><rect x="24.500" y="32" width="18" height="11" fill="#88b4e8" stroke="#4a7cc0"/></symbol>
<symbol id="hist" viewBox="0 0 44 44"><path d="M4 21q-3-12 10-13V2l11 9-11 9v-5q-5 2-2 8-6 2-8-2z" fill="#8bc08b" stroke="#5a8a5a"/><path d="M16 26l12-9v5q13-1 12 9-1 9-8 10l-4-4q6-3 3-7l-3 1v4z" fill="#e8803c" stroke="#a85010"/></symbol>
<symbol id="ddf" viewBox="0 0 36 32"><path d="M10 3v26L1.500 16z" fill="#a0a0a0" stroke="#777" stroke-width="1.500"/><rect x="10" y="1" width="24" height="30" fill="#fff" stroke="#8a8a86" stroke-width="2"/><path d="M10 15.500h24" stroke="#8a8a86" stroke-width="2"/><path d="M14.500 8.500h15" stroke="#555" stroke-width="3.400" stroke-linecap="round"/><path d="M16 23h13" stroke="#555" stroke-width="2"/></symbol>
<symbol id="dde" viewBox="0 0 36 32"><path d="M10 3v26L1.500 16z" fill="#a0a0a0" stroke="#777" stroke-width="1.500"/><rect x="10" y="1" width="24" height="30" fill="#fce97a" stroke="#c4a000" stroke-width="2"/><text x="22" y="26.500" font-size="50" text-anchor="middle" class="se" fill="#5c3566">ε</text></symbol>
<symbol id="plus" viewBox="0 0 32 32"><path d="M11 2h9v9h9v9h-9v9h-9v-9H2v-9h9z" fill="#fff" stroke="#4f8f55" stroke-width="2.200"/><path d="M15.500 7v17M7 15.500h17" stroke="#4f8f55" stroke-width="4"/></symbol>
<symbol id="minus" viewBox="0 0 32 32"><rect x="2" y="10" width="28" height="11" fill="#f6f0f0" stroke="#d8c8c8" stroke-width="1.800"/><path d="M7 15.500h18" stroke="#ccc" stroke-width="4"/></symbol>
<symbol id="up" viewBox="0 0 32 32"><path d="M16 4l13 22H3z" fill="#d8dcdf" stroke="#b4b8bb" stroke-width="1.800"/></symbol>
<symbol id="dup" viewBox="0 0 32 32"><path d="M2 7h4v19h20v3H2z" fill="#8a8a86" stroke="#444" stroke-width="1"/><path d="M7 2h21v23H7z" fill="#eee" stroke="#666" stroke-width="1.600"/><rect x="18" y="17" width="13" height="13" rx="2" fill="#c4a000"/><path d="M24.500 19v9M20.500 21.300l8 4.600M20.500 25.900l8-4.600" stroke="#fff" stroke-width="1.500"/></symbol>
<symbol id="unlock" viewBox="0 0 32 32"><path d="M9 8q0-5 7-5.500 8 .5 8 7V15" fill="none" stroke="#8a8a86" stroke-width="3.200"/><rect x="4" y="14" width="24" height="16" rx="2" fill="#f0dc20" stroke="#c4a000" stroke-width="1.600"/></symbol>
<symbol id="bevel" viewBox="0 0 28 24"><path d="M0 0h18l9 8v16H9V14H0z" fill="#6289b8"/><path d="M0 1h17.500L26.500 9v15M0 15.500h9V24" fill="none" stroke="#000" stroke-width="2"/><path d="M0 8.500h20M18 14v10" stroke="#e8cf22" stroke-width="3" stroke-dasharray="4 4"/></symbol>
<symbol id="fx" viewBox="0 0 32 32"><path d="M17 12l4.500 5H29l-5 5 2 9-7-5-6 4z" fill="#aaa"/><path d="M14 1l3.500 9.500 9 .3-7 6 2.500 9.700-8-5.500-8 5.500 2.500-9.700-7-6 9-.3z" fill="#d8d2b8" stroke="#fff" stroke-width="1"/></symbol>
<symbol id="mouse" viewBox="0 0 32 32"><path d="M8 3q4-3 7 1l6 9q6 5 5 12-3 7-10 5-5-3-4-10L5 13q-2-6 3-10z" fill="#fff" stroke="#000" stroke-width="2.600"/><path d="M8 5l6 9 2-1-6-9M5 10l9 11 8-7M17 25a3 3 0 1 0 1-2z" fill="none" stroke="#000" stroke-width="2.200"/><path d="M22 8l1-1M26 5l1-1M27 10l1-1M2 22l1-1" stroke="#000" stroke-width="2.400"/></symbol>
<symbol id="lock" viewBox="0 0 28 34"><path d="M7 17V9q0-7 7-7t7 7v8" fill="none" stroke="#8a8a8a" stroke-width="4.400"/><path d="M7 17V9q0-7 7-7t7 7v8" fill="none" stroke="#ddd" stroke-width="1.400"/><rect x="2" y="16" width="24" height="17" rx="2.500" fill="#666"/></symbol>
<symbol id="globe" viewBox="0 0 32 32"><path d="M10 2h12l7 9 2 4H1l2-4z" fill="#666"/><path d="M16 2v13M10 2L7 15M22 2l3 13M6 8h20" stroke="#eee" stroke-width="1.300"/><path d="M3 15q2 10 9 15h8q7-5 9-15M4 19h24M8 25h16M11 15q0 9 3 15M21 15q0 9-3 15" fill="none" stroke="#777" stroke-width="2"/></symbol>
<symbol id="bub" viewBox="0 0 34 34"><path d="M17 2q16 1 16 13 0 5-3 8l2 9-10-5Q2 29 1 15 2 3 17 2z" fill="#666"/><g fill="#fff"><circle cx="10" cy="15.500" r="2.300"/><circle cx="17" cy="15.500" r="2.300"/><circle cx="24" cy="15.500" r="2.300"/></g></symbol>
<symbol id="mag" viewBox="0 0 24 24"><circle cx="10" cy="9.500" r="8.300" fill="none" stroke="#8a8a8a" stroke-width="1.800"/><path d="M16 15.500l6.500 7" stroke="#8a8a8a" stroke-width="3" stroke-linecap="round"/></symbol>

<filter id="rough" x="-5%" y="-5%" width="110%" height="110%" color-interpolation-filters="sRGB"><feTurbulence type="fractalNoise" baseFrequency=".06" numOctaves="2" seed="4"/><feDisplacementMap in="SourceGraphic" scale="12" xChannelSelector="R" yChannelSelector="G"/></filter>
<filter id="b6" x="-50%" y="-50%" width="200%" height="200%" color-interpolation-filters="sRGB"><feGaussianBlur stdDeviation="6"/></filter>
<filter id="b14" x="-50%" y="-50%" width="200%" height="200%" color-interpolation-filters="sRGB"><feGaussianBlur stdDeviation="16"/></filter>
<filter id="b30" x="-60%" y="-60%" width="220%" height="220%" color-interpolation-filters="sRGB"><feGaussianBlur stdDeviation="34"/></filter>
<filter id="b60" x="-60%" y="-60%" width="220%" height="220%" color-interpolation-filters="sRGB"><feGaussianBlur stdDeviation="62"/></filter>
<filter id="speck" x="-30%" y="-30%" width="160%" height="160%" color-interpolation-filters="sRGB"><feGaussianBlur in="SourceGraphic" stdDeviation="16" result="s"/><feTurbulence type="fractalNoise" baseFrequency=".13 .2" numOctaves="3" seed="8"/><feColorMatrix values="0 0 0 0 0 0 0 0 0 0 0 0 0 0 0 4.500 0 0 0 -1.750" result="n"/><feComposite in="s" in2="n" operator="in"/></filter>
<filter id="edge" x="-20%" y="-20%" width="140%" height="140%" color-interpolation-filters="sRGB"><feTurbulence type="fractalNoise" baseFrequency=".1" numOctaves="3" seed="2"/><feDisplacementMap in="SourceGraphic" scale="16" xChannelSelector="R" yChannelSelector="G"/><feGaussianBlur stdDeviation="2.500"/></filter>
</defs>
</svg>

<div class="window">
<header class="titlebar"><span class="lights"><i class="l-red"></i><i class="l-yel"></i><i class="l-grn"></i></span><span class="wtitle">*FernandinaSenDT128_TS - QGIS</span></header>

<div class="toolbar">
<i class="grip first"></i>
<b class="tb"><svg><use href="#new"/></svg></b><b class="tb"><svg><use href="#open"/></svg></b><b class="tb"><svg><use href="#save"/></svg></b><b class="tb"><svg><use href="#layout"/></svg></b><b class="tb"><svg><use href="#manager"/></svg></b><b class="tb"><svg><use href="#stylem"/></svg></b>
<i class="grip"></i>
<b class="tb"><svg><use href="#hand"/></svg></b><b class="tb"><svg><use href="#pan"/></svg></b><b class="tb"><svg><use href="#zin"/></svg></b><b class="tb"><svg><use href="#zout"/></svg></b><b class="tb"><svg><use href="#zfull"/></svg></b><b class="tb"><svg><use href="#zsel"/></svg></b><b class="tb"><svg><use href="#zlay"/></svg></b><b class="tb off"><svg><use href="#znat"/></svg></b><b class="tb"><svg><use href="#zlast"/></svg></b><b class="tb off"><svg><use href="#znext"/></svg></b><b class="tb"><svg><use href="#nview"/></svg></b><b class="tb"><svg><use href="#nbook"/></svg></b><b class="tb"><svg><use href="#sbook"/></svg></b><b class="tb"><svg><use href="#refresh"/></svg></b>
<i class="grip"></i>
<b class="tb"><svg><use href="#ident"/></svg></b><b class="tb off"><svg><use href="#action"/></svg></b><b class="more"></b><b class="tb"><svg><use href="#select"/></svg></b><b class="more"></b><b class="tb"><svg><use href="#selform"/></svg></b><b class="more"></b><b class="tb"><svg><use href="#desel"/></svg></b><b class="tb"><svg><use href="#table"/></svg></b><b class="tb"><svg><use href="#abacus"/></svg></b><b class="tb"><svg><use href="#cog"/></svg></b><b class="tb"><svg><use href="#sigma"/></svg></b><b class="tb"><svg><use href="#ruler"/></svg></b><b class="more"></b><b class="tb"><svg><use href="#tip"/></svg></b><b class="tb"><svg><use href="#anno"/></svg></b><b class="more"></b>
</div>

<div class="toolbar second">
<i class="grip first"></i>
<b class="tb"><svg><use href="#dsm"/></svg></b><b class="tb"><svg><use href="#gpkg"/></svg></b><b class="tb"><svg><use href="#nvec"/></svg></b><b class="tb"><svg><use href="#spat"/></svg></b><b class="tb"><svg><use href="#chip"/></svg></b><i class="sep"></i><b class="tb"><svg><use href="#mesh"/></svg></b>
<i class="grip"></i>
<b class="tb off menu"><svg><use href="#pencils"/></svg></b><b class="tb"><svg><use href="#pencil"/></svg></b><b class="tb off"><svg><use href="#saveed"/></svg></b><b class="tb off"><svg><use href="#addpt"/></svg></b><b class="tb off"><svg><use href="#vertex"/></svg></b><b class="more"></b><b class="tb off"><svg><use href="#multi"/></svg></b><b class="tb off"><svg><use href="#trash"/></svg></b><b class="tb off"><svg><use href="#cut"/></svg></b><b class="tb off"><svg><use href="#copy"/></svg></b><b class="tb off"><svg><use href="#paste"/></svg></b><b class="tb off undo"><svg><use href="#undo"/></svg></b><b class="tb off redo"><svg><use href="#redo"/></svg></b>
<i class="grip"></i>
<b class="tb"><svg><use href="#lab"/></svg></b><b class="tb"><svg><use href="#diag"/></svg></b><i class="sep"></i><b class="tb"><svg><use href="#pinl"/></svg></b><b class="tb"><svg><use href="#unpl"/></svg></b><i class="sep"></i><b class="tb off"><svg><use href="#l1"/></svg></b><b class="tb off"><svg><use href="#l2"/></svg></b><b class="tb off"><svg><use href="#l3"/></svg></b><b class="tb off"><svg><use href="#l4"/></svg></b><b class="tb off"><svg><use href="#l5"/></svg></b>
<i class="grip"></i><b class="tb"><svg><use href="#meta"/></svg></b>
<i class="grip"></i><b class="tb"><svg><use href="#python"/></svg></b><b class="tb pressed"><svg><use href="#active"/></svg></b>
<i class="grip"></i><b class="tb"><svg><use href="#help"/></svg></b>
<i class="grip"></i>
</div>

<main class="main">
<aside class="left">
<div class="dtitle"><span>Browser</span><svg><use href="#float"/></svg><svg><use href="#close"/></svg></div>
<div class="dtools btools"><svg><use href="#addl"/></svg><svg><use href="#refresh"/></svg><svg><use href="#filter"/></svg><svg><use href="#coll"/></svg><svg><use href="#info"/></svg></div>
<div class="browser">
<div class="btop">
<ul class="tree">
<li><i class="a0"></i><svg class="big"><use href="#star"/></svg>Favorites</li>
<li><i class="ar"></i><svg viewBox="2 1 20 22"><use href="#sbook" width="24" height="24"/></svg>Spatial Bookmarks</li>
<li><i class="ar"></i><svg><use href="#phome"/></svg>Project Home</li>
<li><i class="ad"></i><svg><use href="#home"/></svg>Home</li>
<li class="n1"><i class="ar"></i><svg><use href="#folda"/></svg>2019_Kirishima</li>
<li class="n1"><i class="ar"></i><svg><use href="#folda"/></svg>2020_Kyushu</li>
<li class="n1"><i class="ar"></i><svg><use href="#fold"/></svg>Applications</li>
<li class="n1"><i class="ar"></i><svg><use href="#fold"/></svg>Box Sync</li>
<li class="n1"><i class="ar"></i><svg><use href="#fold"/></svg>Creative Cloud Files</li>
<li class="n1"><i class="ad"></i><svg><use href="#foldo"/></svg>data</li>
<li class="n2"><i class="ar"></i><svg><use href="#fold"/></svg>0_Manuals</li>
<li class="n2"><i class="ar"></i><svg><use href="#fold"/></svg>DEM</li>
<li class="n2"><i class="ar"></i><svg><use href="#fold"/></svg>Figs</li>
<li class="n2"><i class="ar"></i><svg><use href="#fold"/></svg>Galapagos</li>
<li class="n2"><i class="ar"></i><svg><use href="#fold"/></svg>GoogleEarth</li>
<li class="n2"><i class="ar"></i><svg><use href="#fold"/></svg>infiles_yzhang1</li>
<li class="n2"><i class="ar"></i><svg><use href="#fold"/></svg>Kirishima</li>
<li class="n2"><i class="ar"></i><svg><use href="#fold"/></svg>Kyushu</li>
<li class="n2"><i class="ar"></i><svg><use href="#fold"/></svg>Others</li>
</ul>
<div class="vbar"><b class="vbtn"><i class="au"></i></b><b class="vthumb"></b><b class="vtrack"></b><b class="vbtn last"><i class="ad2"></i></b></div>
</div>
<div class="hbar"><b class="hbtn"><i class="al"></i></b><b class="hthumb"></b><b class="htrack"></b><b class="hbtn r"><i class="ar2"></i></b><b class="hcorner"></b></div>
</div>
<div class="hsplit"><i></i></div>
<div class="dtitle lt"><span>Layers</span><svg><use href="#float"/></svg><svg><use href="#close"/></svg></div>
<div class="dtools ltools"><b class="pressed2"><svg><use href="#brush"/></svg></b><svg><use href="#grp"/></svg><span class="eye"><svg><use href="#eye"/></svg></span><svg><use href="#filter"/></svg><svg class="epsi"><use href="#eps"/></svg><i class="dn"></i><svg><use href="#expd"/></svg><svg><use href="#coll"/></svg><svg><use href="#rem"/></svg></div>
<div class="layers"><div class="lrow"><svg class="ck"><use href="#chkon"/></svg><i class="gdot"></i><u>ts</u></div></div>
</aside>
<div class="vsplit v1"><i></i></div>

<section class="canvas">
<svg viewBox="714 278 1269 1449" preserveAspectRatio="none">
<defs><clipPath id="isl"><path d="M70 320L105 308 140 282 175 272 225 275 270 262 330 265 400 262 480 266 530 262 590 256 640 235 680 205 720 186 775 180 830 170 855 152 885 140 887 110 910 103 945 73 980 70 995 55 1030 68 1050 75 1070 60 1105 62 1125 80 1140 105 1155 135 1190 145 1240 152 1258 170 1275 197 1310 203 1335 220 1340 262 1330 270 1365 285 1380 310 1390 335 1412 370 1430 420 1430 455 1465 480 1472 515 1490 550 1497 590 1490 630 1490 690 1492 740 1502 780 1513 830 1487 860 1480 900 1470 940 1472 980 1455 1015 1437 1020 1425 1065 1445 1075 1442 1110 1453 1140 1457 1195 1437 1200 1425 1245 1405 1250 1390 1290 1385 1315 1350 1330 1310 1360 1295 1390 1270 1405 1240 1437 1200 1435 1150 1428 1135 1442 1080 1460 1020 1462 950 1478 890 1492 840 1503 800 1490 770 1465 710 1452 690 1435 640 1422 570 1408 480 1403 440 1388 365 1385 350 1365 310 1340 305 1315 290 1297 310 1280 290 1245 265 1210 235 1180 215 1110 200 1055 175 1005 150 965 130 925 118 890 105 850 98 800 100 700 95 640 92 520 78 490 62 460 50 400 50 355Z"/></clipPath></defs>
<g transform="translate(719 478) scale(.7908 .6888)">
<g filter="url(#rough)"><g clip-path="url(#isl)">
<rect x="0" y="0" width="1568" height="1568" fill="#dde9f1"/>
<g filter="url(#b60)">
<ellipse cx="1400" cy="540" rx="220" ry="560" fill="#f7f6f6"/>
<ellipse cx="1130" cy="260" rx="280" ry="240" fill="#f0f3f5"/>
<ellipse cx="1220" cy="700" rx="240" ry="240" fill="#f4f5f6"/>
<ellipse cx="1020" cy="780" rx="180" ry="120" fill="#eff3f5"/>
<ellipse cx="1330" cy="1180" rx="130" ry="200" fill="#f1f3f5"/>
<ellipse cx="560" cy="340" rx="170" ry="80" fill="#eef2f5"/>
</g>
<g filter="url(#b30)">
<ellipse cx="620" cy="370" rx="100" ry="80" fill="#f9f6f4"/>
<ellipse cx="470" cy="430" rx="100" ry="80" fill="#f4f6f6"/>
<ellipse cx="420" cy="700" rx="90" ry="230" fill="#f8f5f4"/>
<ellipse cx="250" cy="680" rx="130" ry="130" fill="#ebf2f5"/>
<ellipse cx="400" cy="1020" rx="230" ry="60" fill="#f5f6f6"/>
<ellipse cx="600" cy="1000" rx="90" ry="80" fill="#f5f5f5"/>
<ellipse cx="900" cy="930" rx="60" ry="80" fill="#f3f5f6"/>
<ellipse cx="1390" cy="980" rx="110" ry="34" fill="#f9e3dd"/>
<ellipse cx="1240" cy="1035" rx="40" ry="16" fill="#f8f0ed"/>
<ellipse cx="1450" cy="400" rx="30" ry="70" fill="#f8eeea"/>
</g>
<path d="M50 355L62 460 92 520 98 800 150 965 200 1055M290 1240L310 1340 365 1385 570 1408 710 1452 840 1503 1080 1460 1240 1437 1350 1330 1455 1195M1513 830L1490 690 1430 420" fill="none" stroke="#f3f4f4" stroke-width="12" opacity=".7" filter="url(#b6)"/>
<g filter="url(#b30)">
<ellipse cx="720" cy="540" rx="140" ry="100" fill="#b4d6e7"/>
<ellipse cx="780" cy="640" rx="130" ry="160" fill="#93c6e0"/>
<path d="M740 530L800 520 850 590 868 680 850 780 780 760z" fill="#0f73b2"/>
</g>
<path d="M740 560L800 540 850 600 860 690 840 760 790 740z" fill="#2f86bf" opacity=".7" filter="url(#b14)"/>
<ellipse cx="650" cy="585" rx="70" ry="40" fill="#b9d9e9" filter="url(#b14)"/>
<path d="M555 760L640 740 680 850 600 850 530 830z" fill="#74b3d6" filter="url(#b14)"/>
<ellipse cx="545" cy="785" rx="10" ry="22" fill="#2178b4" filter="url(#b6)"/>
<path d="M640 850L800 870 760 920 660 940z" fill="#96c7e0" filter="url(#b14)"/>
<path d="M568 570L590 560 600 720 570 760z" fill="#d9e7ef" filter="url(#b6)"/>
<path d="M605 650L640 622 700 606 745 612 790 632 805 660 795 690 835 740 838 785 815 835 780 862 735 870 685 860 650 830 630 760 605 720z" fill="#0571b0" opacity=".85" filter="url(#b14)"/>
<path d="M606 655L630 635 660 620 700 608 745 606 780 622 796 645 788 668 796 700 822 730 838 780 822 830 785 860 735 870 685 862 650 838 626 790 632 750 606 712z" fill="#0571b0" filter="url(#edge)"/>
<g filter="url(#speck)">
<path d="M560 545L640 522 730 538 785 585 805 640 775 610 705 568 600 560z" fill="#f2f7fa"/>
<path d="M560 545L640 522 730 538 720 555 600 560z" fill="#fff"/>
<path d="M775 645L803 630 800 690 780 680z" fill="#8fc2de"/>
<path d="M830 740L870 780 900 860 850 870 825 830z" fill="#fff"/>
<path d="M540 810L600 780 670 850 650 880 560 860z" fill="#e3eff5"/>
<path d="M840 850l60-20 50 160-50 20-30-50z" fill="#fdf3ef"/>
<path d="M100 790l180-40 130 60-100 60-200-50zM250 620l110-50 60 120-100 40z" fill="#f9f8f7"/>
<path d="M590 960h80l-40 190h-20zM700 920l60-10v20l-30 40h-30z" fill="#fbf8f6"/>
<path d="M190 970l120-110 20 20-110 110z" fill="#b4d6e7"/>
<path d="M400 780l90 10-10 40-80 10z" fill="#b9dbea"/>
</g>
<g filter="url(#b14)">
<path d="M400 500L470 485 520 530 540 600 528 690 545 740 515 790 512 860 492 860 488 800 455 740 430 640z" fill="#f7c3ad"/>
<path d="M475 600L520 620 528 690 548 730 515 785 485 755 465 690z" fill="#ea8068"/>
<path d="M260 740l80-20 60 70-30 50-70 5-50-50z" fill="#f9d6c8"/>
<path d="M440 860L590 890 630 960 600 1025 510 1020 410 960z" fill="#f8d0c0"/>
<path d="M480 950Q450 1030 380 1040L225 1070 235 1175 300 1115 400 1080 480 1020z" fill="#f6bfa8"/>
</g>
<ellipse cx="508" cy="742" rx="26" ry="36" fill="#ca0020" filter="url(#b14)"/>
<path d="M522 715l22 16-28 34-20-12z" fill="#ca0020" opacity=".6" filter="url(#b6)"/>
<path d="M208 1085L222 1115 236 1175" fill="none" stroke="#ca0020" stroke-width="30" filter="url(#b6)"/>
<g filter="url(#speck)">
<path d="M400 500L470 480 510 520 535 590 525 690 500 650 430 580z" fill="#ee8a70"/>
<path d="M465 570L510 580 530 680 510 700 480 640z" fill="#cc1c30"/>
<path d="M530 420l50 20 10 70-50 40z" fill="#f6b79c"/>
<path d="M290 775l45-15 45 35-10 35-55 10-30-25z" fill="#cc1a2e"/>
<path d="M245 800l30-90 60-20 80 110-50 50-70-10z" fill="#f3a288"/>
<path d="M445 850l60-10 10 120-50 30-45-30z" fill="#cc1028"/>
<path d="M360 900l80-60 120 50 60 40-20 90-90-20-100-40z" fill="#f09a80"/>
<path d="M770 895l62-5v35l-62 5zM785 920h25v50h-20z" fill="#e05a4c"/>
<path d="M700 925h40v30h-40z" fill="#f4b59c"/>
<ellipse cx="1470" cy="610" rx="20" ry="18" fill="#f08a70"/>
</g>
<g fill="none" stroke-width="9" filter="url(#edge)" opacity=".75"><path d="M515 870Q530 920 500 1030M545 880Q555 950 525 1040M575 890Q580 960 545 1010M605 890Q600 960 590 1030" stroke="#ef9478"/><path d="M490 860Q500 900 470 960M515 900L505 940" stroke="#cf2438"/><path d="M640 960L620 1020M660 970L640 1025" stroke="#f6c4b0"/></g>
<circle cx="465" cy="965" r="9" fill="#ca0020" filter="url(#edge)"/>
<circle cx="797" cy="912" r="7" fill="#ca0020" opacity=".7" filter="url(#edge)"/>
<g fill="#f4b49c"><circle cx="1137" cy="104" r="8"/><circle cx="1451" cy="1190" r="7"/><circle cx="135" cy="937" r="7"/><circle cx="1486" cy="590" r="6"/><circle cx="98" cy="655" r="5"/><circle cx="252" cy="1192" r="9"/><circle cx="578" cy="530" r="9"/></g>
</g></g>
<g fill="#fff" transform="translate(1.500 3)"><path d="M562 573L566 640 560 655 570 690 565 742 545 735 520 712 533 690 530 655 545 630 556 600zM668 657L665 672 672 685 674 702 650 706 645 717 637 711 622 710 622 701 640 695 650 675zM791 697L794 712 785 732 780 739 774 737 776 722 783 716zM582 535L600 525 614 535 600 545z"/></g>
</g>
</svg>
</section>
<div class="vsplit v2"><i></i></div>

<aside class="right">
<div class="dtitle rt"><span>Layer Styling</span><svg><use href="#float"/></svg><svg><use href="#close"/></svg></div>
<div class="combo c1"><svg class="ci"><use href="#pts"/></svg><span>ts</span><i class="dn"></i></div>
<div class="rbody">
<nav class="tabs"><b class="t0"><svg><use href="#brush"/></svg></b><div class="tdark"><b><svg class="tl"><use href="#tablab"/></svg></b><b><svg><use href="#cube"/></svg></b><b><svg><use href="#brs"/></svg></b><b><svg class="th"><use href="#hist"/></svg></b></div></nav>
<div class="panel">
<div class="combo c2"><svg class="ci"><use href="#single"/></svg><span>Single symbol</span><i class="dn"></i></div>
<div class="sym">
<div class="prev"><i></i></div>
<ul class="stree">
<li><i class="ad"></i><em><i class="dot"></i></em><strong>Marker</strong></li>
<li class="m1"><i class="ad"></i><em><i class="dot"></i></em>Filled marker</li>
<li class="m2"><i class="ad"></i><em class="sq"></em><strong>Fill</strong></li>
<li class="m3"><i class="a0"></i><em class="sq sel"></em>Simple fill</li>
</ul>
<div class="sbtns"><b><svg><use href="#plus"/></svg></b><b class="dis"><svg><use href="#up"/></svg></b><b class="dis"><svg><use href="#minus"/></svg></b><b class="dis flip"><svg><use href="#up"/></svg></b><b><svg><use href="#dup"/></svg></b><b><svg><use href="#unlock"/></svg></b></div>
</div>
<hr>
<div class="trow"><label>Symbol layer type</label><div class="combo"><span>Simple fill</span><i class="dn"></i></div></div>
<div class="frow f1"><label>Fill color</label><div class="ctl"><div class="cbtn"><b class="green"></b></div><div class="cdd"><i class="dn"></i></div></div><span class="dd"><svg><use href="#dde"/></svg><i></i></span></div>
<div class="frow f2"><label>Fill style</label><div class="ctl"><div class="combo"><b class="swatch"></b><span>Solid</span><i class="dn"></i></div></div><span class="dd"><svg><use href="#ddf"/></svg><i></i></span></div>
<div class="frow f3"><label>Stroke color</label><div class="ctl"><div class="cbtn"><b class="checker"></b></div><div class="cdd"><i class="dn"></i></div></div><span class="dd"><svg><use href="#ddf"/></svg><i></i></span></div>
<div class="frow f4"><label>Stroke width</label><div class="ctl"><div class="spin wide"><span>Hairline</span><b><i class="su"></i><i class="sd pale"></i></b></div><div class="combo unit"><span>Millimeters</span><i class="dn"></i></div></div><span class="dd"><svg><use href="#ddf"/></svg><i></i></span></div>
<div class="frow f5"><label>Stroke style</label><div class="ctl"><div class="combo"><b class="line"></b><span>Solid Line</span><i class="dn"></i></div></div><span class="dd"><svg><use href="#ddf"/></svg><i></i></span></div>
<div class="frow f6"><label>Join style</label><div class="ctl"><div class="combo"><svg class="bev"><use href="#bevel"/></svg><span>Bevel</span><i class="dn"></i></div></div><span class="dd"><svg><use href="#ddf"/></svg><i></i></span></div>
<div class="frow f7"><label>Offset</label><div class="ctl"><div class="xy"><div><label>x</label><div class="spin"><span>0.000000</span><b><i class="su"></i><i class="sd"></i></b></div></div><div><label>y</label><div class="spin"><span>0.000000</span><b><i class="su"></i><i class="sd"></i></b></div></div></div><div class="combo unit"><span>Millimeters</span><i class="dn"></i></div></div></div>
<div class="erow"><svg class="ck"><use href="#chkon"/></svg><label class="e1">Enable layer</label><span class="dd"><svg><use href="#ddf"/></svg><i></i></span><svg class="ck ck2"><use href="#chk"/></svg><label class="e2">Draw effects</label><b class="ibtn dis"><svg><use href="#fx"/></svg></b></div>
<div class="rend"><i></i><strong>Layer Rendering</strong></div>
<div class="brow"><b class="ibtn or"><svg><use href="#undo"/></svg></b><b class="ibtn gr"><svg><use href="#redo"/></svg></b><svg class="ck lu"><use href="#chkon"/></svg><label>Live update</label><button>Apply</button></div>
</div>
</div>
</aside>
</main>

<footer class="status">
<div class="locator"><svg><use href="#mag"/></svg><span>Type to locate (⌘K)</span></div>
<label class="s-coord">Coordinate</label><div class="field f-coord">-91.4982,-0.3645</div><svg class="s-mouse"><use href="#mouse"/></svg>
<label class="s-scale">Scale</label><div class="field f-scale"><span>1:308206</span><b><i class="dn"></i></b></div><svg class="s-lock"><use href="#lock"/></svg>
<label class="s-mag">Magnifier</label><div class="spin f-mag"><span>100%</span><b><i class="su"></i><i class="sd"></i></b></div>
<label class="s-rot">Rotation</label><div class="spin f-rot"><span>0.0 °</span><b><i class="su"></i><i class="sd"></i></b></div>
<svg class="ck s-ck"><use href="#chkon"/></svg><label class="s-ren">Render</label><svg class="s-globe"><use href="#globe"/></svg><label class="s-epsg">EPSG:4326</label><svg class="s-bub"><use href="#bub"/></svg><i class="size"></i>
</footer>
</div>
</body>
</html>
```
FILE: styles.css
```css
* { box-sizing: border-box; }
html, body { margin: 0; padding: 0; }
body {
  width: 2988px; height: 1938px; overflow: hidden; background: #fff;
  padding: 75px 0 0 112px;
  font: 25.500px/36px Inter, "Liberation Sans", sans-serif; letter-spacing: -0.07px; color: #000;
}
.defs { position: absolute; }
b { font-weight: inherit; display: block; }
i { display: block; font-style: normal; }
svg { display: block; flex: none; }
label, span { white-space: nowrap; }
ul { list-style: none; margin: 0; padding: 0; }
.ti { font-family: "Open Sans", sans-serif; letter-spacing: 0; }
.se { font-family: "Liberation Serif", serif; letter-spacing: 0; }

.window {
  width: 2765px; height: 1715px; background: #ebebeb; border-radius: 11px; overflow: hidden;
  display: flex; flex-direction: column;
  box-shadow: 0 0 0 1px rgba(0,0,0,.28), 0 36px 92px rgba(0,0,0,.46);
}
.titlebar {
  height: 45px; flex: none; display: flex; align-items: center; justify-content: center; position: relative;
  background: linear-gradient(#e8e8e8, #cfcfcf); border-top: 2px solid #f4f4f4; border-bottom: 2px solid #a9a9a9; color: #444;
}
.lights { position: absolute; left: 16px; top: 9px; display: flex; gap: 16px; }
.lights i { width: 24px; height: 24px; border-radius: 50%; }
.l-red { background: #ee6a5f; border: 1px solid #d5544a; }
.l-yel { background: #f5bd4f; border: 1px solid #d9a03c; }
.l-grn { background: #61c554; border: 1px solid #4fab42; }
.wtitle { margin-left: -5px; font-size: 26px; letter-spacing: -.22px; padding-top: 2px; }

.toolbar {
  height: 78px; flex: none; display: flex; align-items: center;
  background: linear-gradient(#f6f6f6, #e9e9e9); border-bottom: 2px solid #b2b2b2;
}
.second { height: 77px; }
.grip { width: 32px; height: 35px; flex: none; position: relative; }
.grip.first { width: 25px; }
.grip::before {
  content: ""; position: absolute; right: 7px; top: 0; width: 10px; height: 35px;
  background: radial-gradient(circle at 2px 2.500px, #b8b8b8 1.200px, transparent 1.700px) 0 0 / 7px 5px;
}
.grip:not(.first)::after { content: ""; position: absolute; left: 6px; top: 55px; width: 2px; height: 2px; background: #ebebeb; }
.tb { width: 66px; height: 62px; flex: none; display: flex; align-items: center; justify-content: center; position: relative; }
.tb svg { width: 48px; height: 48px; }
.tb.off svg { opacity: .3; filter: saturate(.45); }
.undo svg { color: #a07860; }
.redo svg { color: #80a080; }
.tb.pressed { width: 64px; margin: 0 1px; background: #d9d9d9; border: 2px solid #a6a6a6; border-radius: 5px; }
.more { width: 24px; flex: none; }
.more::before, .dn { content: ""; display: block; width: 0; height: 0; border: solid transparent; border-width: 9px 6.500px 0; border-top-color: #555; }
.more::before { margin-left: 4px; }
.menu::after { content: ""; position: absolute; right: 6px; bottom: 5px; border: solid transparent; border-width: 6px 5px 0; border-top-color: #555; }
.sep { width: 14px; height: 38px; flex: none; }
.sep::before { content: ""; display: block; margin-left: 5px; width: 3px; height: 38px; background: #d2d2d2; border-right: 1px solid #fff; }

.main { flex: 1; display: flex; min-height: 0; }
.left { width: 587px; display: flex; flex-direction: column; }
.dtitle { height: 42px; flex: none; display: flex; align-items: center; gap: 7px; padding: 0 4px 2px 8px; font-size: 22px; color: #222; letter-spacing: -.05px; }
.dtitle span { flex: 1; }
.dtitle svg { width: 21px; height: 21px; }
.dtitle.lt { height: 40px; }
.dtools { display: flex; align-items: center; flex: none; }
.dtools svg { width: 32px; height: 32px; }
.btools { height: 54px; margin-bottom: 5px; padding-left: 16px; gap: 18px; }
.browser { height: 694px; flex: none; border: 2px solid #b2b2b2; border-left-width: 1px; background: #fff; display: flex; flex-direction: column; }
.btop { flex: 1; display: flex; min-height: 0; overflow: hidden; }
.tree { flex: 1; overflow: hidden; padding-top: 1px; }
.tree li { height: 36px; display: flex; align-items: center; }
.tree li > i { flex: none; }
.tree svg { width: 28px; height: 28px; margin: 0 15px 0 8.500px; }
.tree svg.big { width: 34px; height: 34px; margin: 0 12px 0 6px; }
.n1 { padding-left: 40px; } .n2 { padding-left: 80px; }
.tree .a0 { width: 40px; }
.ar { border: solid transparent; border-width: 8px 0 8px 8px; border-left-color: #555; margin: 0 15px 0 17px; }
.ad { border: solid transparent; border-width: 8px 7.500px 0; border-top-color: #555; margin: 0 12px 0 13px; flex: none; }
.vbar { width: 27px; border-left: 1px solid #b2b2b2; display: flex; flex-direction: column; }
.vbtn, .hbtn { display: flex; align-items: center; justify-content: center; background: linear-gradient(90deg,#fff,#eee); }
.vbtn { height: 26px; border-bottom: 2px solid #b2b2b2; }
.vbtn.last { height: 28px; border-bottom: 0; border-top: 2px solid #b2b2b2; }
.vthumb { height: 125px; background: linear-gradient(90deg,#fff,#ececec); border-bottom: 2px solid #b2b2b2; }
.vtrack { flex: 1; background: #e3e3e3; }
.au { border: solid transparent; border-width: 0 7.500px 9px; border-bottom-color: #555; }
.ad2 { border: solid transparent; border-width: 9px 7.500px 0; border-top-color: #555; }
.al { border: solid transparent; border-width: 8px 8px 8px 0; border-right-color: #555; }
.ar2 { border: solid transparent; border-width: 8px 0 8px 8px; border-left-color: #555; }
.hbar { height: 28px; flex: none; border-top: 1px solid #b2b2b2; display: flex; }
.hbtn { width: 28px; border-right: 2px solid #b2b2b2; background: linear-gradient(#fff,#eee); }
.hbtn.r { border: 0; border-left: 2px solid #b2b2b2; }
.hthumb { width: 370px; background: linear-gradient(#fff,#ececec); border-right: 2px solid #b2b2b2; }
.htrack { flex: 1; background: #e3e3e3; }
.hcorner { width: 27px; background: #ebebeb; border-left: 1px solid #b2b2b2; }
.hsplit { height: 14px; flex: none; display: flex; justify-content: center; align-items: center; }
.hsplit i { width: 36px; height: 3px; margin-left: 6px; background: repeating-linear-gradient(90deg,#c0c0c0 0 3px,transparent 3px 6px); }
.ltools { height: 56px; margin-bottom: 4px; padding-left: 8px; }
.pressed2 { width: 47px; height: 45px; background: #d9d9d9; border: 2px solid #a6a6a6; border-radius: 5px; display: flex; align-items: center; justify-content: center; margin-right: 11px; }
.ltools > svg, .eye { margin-right: 18px; }
.eye { position: relative; }
.eye::after { content: ""; position: absolute; right: -5px; bottom: -2px; border: solid transparent; border-width: 8px 6px 0; border-top-color: #555; }
.ltools .epsi { margin: 0 9px 0 4px; }
.ltools .dn { border-width: 9px 8px 0; margin-right: 13px; }
.layers { flex: 1; background: #fff; border: solid #b2b2b2; border-width: 2px 2px 1px 1px; }
.lrow { height: 36px; background: #dcdcdc; display: flex; align-items: center; padding-left: 47px; font-weight: 700; }
.ck { width: 28px; height: 28px; }
.gdot { width: 9px; height: 9px; border-radius: 50%; background: #a2e2a6; margin: 0 24px 0 24px; }
.lrow u { text-decoration-thickness: 2px; text-underline-offset: 4px; }

.vsplit { flex: none; display: flex; align-items: center; }
.vsplit i { width: 3px; height: 33px; background: repeating-linear-gradient(#c0c0c0 0 3px,transparent 3px 6px); }
.v1 { width: 13px; padding-left: 7px; } .v2 { width: 19px; padding-left: 8px; }
.canvas { width: 1273px; margin-top: 1px; border: 2px solid #b2b2b2; border-bottom-width: 1px; background: #fff; overflow: hidden; }
.canvas svg { width: 1269px; height: 1450px; }

.right { width: 866px; display: flex; flex-direction: column; }
.rt { padding-left: 2px; padding-right: 0; height: 42px; margin-bottom: 3px; }
.rt svg { margin-right: -1px; }
.combo {
  height: 47px; flex: 1; display: flex; align-items: center; padding: 0 14px 0 7px;
  border: 2px solid #a8a8a8; border-radius: 5px; background: linear-gradient(#fff, #ececec);
}
.combo span { flex: 1; padding-top: 1px; }
.combo .dn { border-width: 10px 7.500px 0; }
.c1, .c2 { height: 48px; flex: none; padding-left: 14px; }
.ci { width: 28px; height: 28px; margin-right: 7px; }
.rbody { flex: 1; display: flex; gap: 6px; margin-top: 12px; min-height: 0; margin-bottom: 5px; }
.tabs { width: 76px; display: flex; flex-direction: column; }
.tabs b { height: 64px; display: flex; align-items: center; justify-content: center; padding-right: 16px; }
.tabs b svg { width: 44px; height: 44px; }
.tabs .t0 { padding-right: 5px; opacity: .7; }
.tabs b svg.tl { height: 32px; margin-top: 8px; }
.tabs b svg.th { height: 42px; }
.tdark { flex: 1; background: #5b5b5b; }
.panel { flex: 1; display: flex; flex-direction: column; }
.sym { display: flex; margin-top: 12px; height: 272px; flex: none; }
.prev { width: 201px; height: 200px; margin: 30px 11px 0 0; display: grid; place-items: center; background: linear-gradient(#a0a0a4,#a0a0a4) 50% 50%/100% 2px no-repeat, linear-gradient(#a0a0a4,#a0a0a4) 50% 50%/2px 100% no-repeat; }
.prev i { width: 11px; height: 11px; border-radius: 50%; background: #9be482; }
.stree { width: 435px; height: 223px; margin: 18px 13px 0 0; background: #fff; border: 1px solid #b2b2b2; border-top-width: 2px; }
.stree li { height: 36px; display: flex; align-items: center; }
.stree em { width: 32px; height: 32px; margin: 0 13px 0 14px; display: grid; place-items: center; font-style: normal; }
.stree .ad { margin: 0 4px 0 14px; }
.stree .a0 { width: 33px; }
.stree .dot { width: 12px; height: 12px; border-radius: 50%; background: #9be482; }
.sq { background: #9be482; } .sq.sel { background: #a2e2a6; }
.m1 { padding-left: 40px; } .m2 { padding-left: 80px; } .stree .m3 { padding-left: 120px; background: #dcdcdc; }
.sbtns { display: grid; grid-template-columns: 56px 56px; grid-auto-rows: 48px; gap: 8px 12px; align-content: start; }
.sbtns b, .ibtn, button { border: 2px solid #a8a8a8; border-radius: 5px; background: linear-gradient(#fff,#ececec); display: flex; align-items: center; justify-content: center; }
.sbtns svg { width: 30px; height: 30px; }
.sbtns .dis, .ibtn.dis { border-color: #c0c0c0; background: #f0f0f0; }
.flip svg { transform: scaleY(-1); }
hr { width: 100%; height: 4px; margin: 0; border: 0; border-top: 2px solid #c4c4c4; background: #fff; flex: none; }
.trow { display: flex; align-items: center; margin: 17px 20px 0 0; flex: none; }
.trow label { width: 218px; padding-left: 2px; }
.frow { display: flex; align-items: center; flex: none; margin-top: 16px; height: 47px; }
.frow > label { width: 184px; padding: 2px 0 0 20px; }
.ctl { width: 490px; display: flex; align-items: center; }
.f1 { margin-top: 25px; height: 54px; } .f2 { margin-top: 15px; } .f3 { height: 54px; margin-top: 16px; } .f4 { margin-top: 15px; } .f5 { margin-top: 17px; } .f6 { margin-top: 17px; } .f7 { margin-top: 17px; height: 107px; }
.cbtn { width: 465px; height: 54px; border: 2px solid #a8a8a8; border-radius: 5px; background: linear-gradient(#fff,#ececec); padding: 9px 7px; }
.cbtn b { height: 32px; border-radius: 5px; }
.green { background: #9be482; }
.checker { background: conic-gradient(#fff 25%, #cbcbcb 0 50%, #fff 0 75%, #cbcbcb 0) 0 0/16px 16px; }
.cdd { width: 24px; margin-left: 1px; height: 54px; border: 2px solid #a8a8a8; border-radius: 4px; background: linear-gradient(#fff,#ececec); display: grid; place-items: center; }
.dd { display: flex; align-items: center; margin-left: 17px; }
.dd svg { width: 36px; height: 32px; }
.dd i { border: solid transparent; border-width: 5px 5px 0; border-top-color: #555; margin: 24px 0 0 6px; }
.swatch { width: 65px; height: 33px; background: #646464; margin: 0 6px 0 3px; }
.line { width: 65px; height: 4px; background: #000; margin: 0 6px 0 3px; }
.bev { width: 29px; height: 28px; margin: 0 9px 0 3px; }
.spin { height: 45px; display: flex; align-items: stretch; border: 2px solid #a8a8a8; border-radius: 5px; background: #fff; width: 205px; overflow: hidden; }
.spin span { flex: 1; padding-left: 8px; line-height: 43px; }
.spin b { width: 28px; border-left: 2px solid #b2b2b2; background: linear-gradient(#fff,#ececec); display: flex; flex-direction: column; align-items: center; justify-content: center; gap: 10px; }
.su { border: solid transparent; border-width: 0 7px 8px; border-bottom-color: #555; }
.sd { border: solid transparent; border-width: 8px 7px 0; border-top-color: #555; }
.sd.pale { border-top-color: #aaa; }
.spin.wide { width: 231px; margin-top: -2px; }
.unit { width: 246px; flex: none; margin-left: 13px; }
.xy { width: 231px; display: flex; flex-direction: column; gap: 17px; }
.xy > div { display: flex; align-items: center; }
.xy label { width: 26px; }
.erow { display: flex; align-items: center; margin-top: 230px; height: 45px; flex: none; color: #222; }
.e1 { width: 178px; padding-left: 10px; }
.erow .ck { margin-left: 2px; }
.erow .dd { margin-left: 10px; }
.erow .ck2 { margin-left: 74px; }
.e2 { width: 188px; padding-left: 10px; }
.ibtn { width: 48px; height: 46px; }
.ibtn svg { width: 30px; height: 30px; }
.rend { margin-top: 47px; height: 40px; display: flex; align-items: center; flex: none; padding-left: 9px; }
.rend i { border: solid transparent; border-width: 11px 0 11px 14px; border-left-color: #333; margin-right: 21px; }
.rend strong { font-size: 26px; letter-spacing: .15px; }
.brow { margin-top: 9px; display: flex; align-items: flex-start; height: 48px; flex: none; color: #222; }
.brow .gr { margin-left: 12px; }
.or svg, .gr svg { width: 32px; height: 32px; }
.or { color: #e8803c; } .gr { color: #8bc08b; }
.brow .lu { margin: 10px 0 0 312px; }
.brow label { margin-top: 7px; padding-left: 10px; width: 176px; }
button { width: 160px; height: 47px; font: inherit; letter-spacing: inherit; color: #222; padding: 0; }

.status { height: 61px; flex: none; display: flex; align-items: center; padding-left: 8px; font-size: 22px; letter-spacing: 0; }
.status label, .status .field { padding-top: 2px; }
.locator { width: 434px; height: 47px; border: 2px solid #a8a8a8; border-radius: 5px; background: #fff; display: flex; align-items: center; padding-left: 15px; font-size: 25.500px; color: #808080; }
.locator span { padding-top: 1px; }
.locator svg { width: 26px; height: 26px; margin-right: 15px; }
.field { height: 45px; border: 2px solid #a8a8a8; border-radius: 5px; background: #fff; display: flex; align-items: center; padding-left: 15px; }
.f-coord { letter-spacing: .1px; }
.s-coord { margin-left: 536px; width: 122px; }
.f-coord { width: 222px; }
.s-mouse { width: 34px; height: 32px; margin-left: 7px; }
.s-scale { margin-left: 25px; width: 64px; }
.status .f-scale { width: 187px; height: 47px; padding: 0 0 0 5px; align-items: stretch; overflow: hidden; }
.f-scale span { flex: 1; line-height: 46px; }
.f-scale b { width: 40px; border-left: 2px solid #b2b2b2; background: linear-gradient(#fff,#ececec); display: grid; place-items: center; }
.f-scale .dn { border-width: 10px 7.500px 0; }
.s-lock { width: 26px; height: 32px; margin-left: 24px; }
.s-mag { margin-left: 18px; width: 105px; }
.f-mag { width: 191px; }
.s-rot { margin-left: 20px; width: 105px; }
.f-rot { width: 184px; }
.s-ck { margin-left: 12px; }
.s-ren { margin-left: 11px; width: 105px; color: #222; }
.s-globe { width: 32px; height: 30px; }
.s-epsg { margin-left: 5px; width: 165px; color: #222; }
.s-bub { width: 34px; height: 32px; }
.size { width: 24px; height: 24px; margin: 30px 0 0 33px; clip-path: polygon(100% 0, 100% 100%, 0 100%); background: radial-gradient(circle at 2px 2px, #b0b0b0 1.300px, transparent 1.800px) 0 0/6px 6px; }
```
